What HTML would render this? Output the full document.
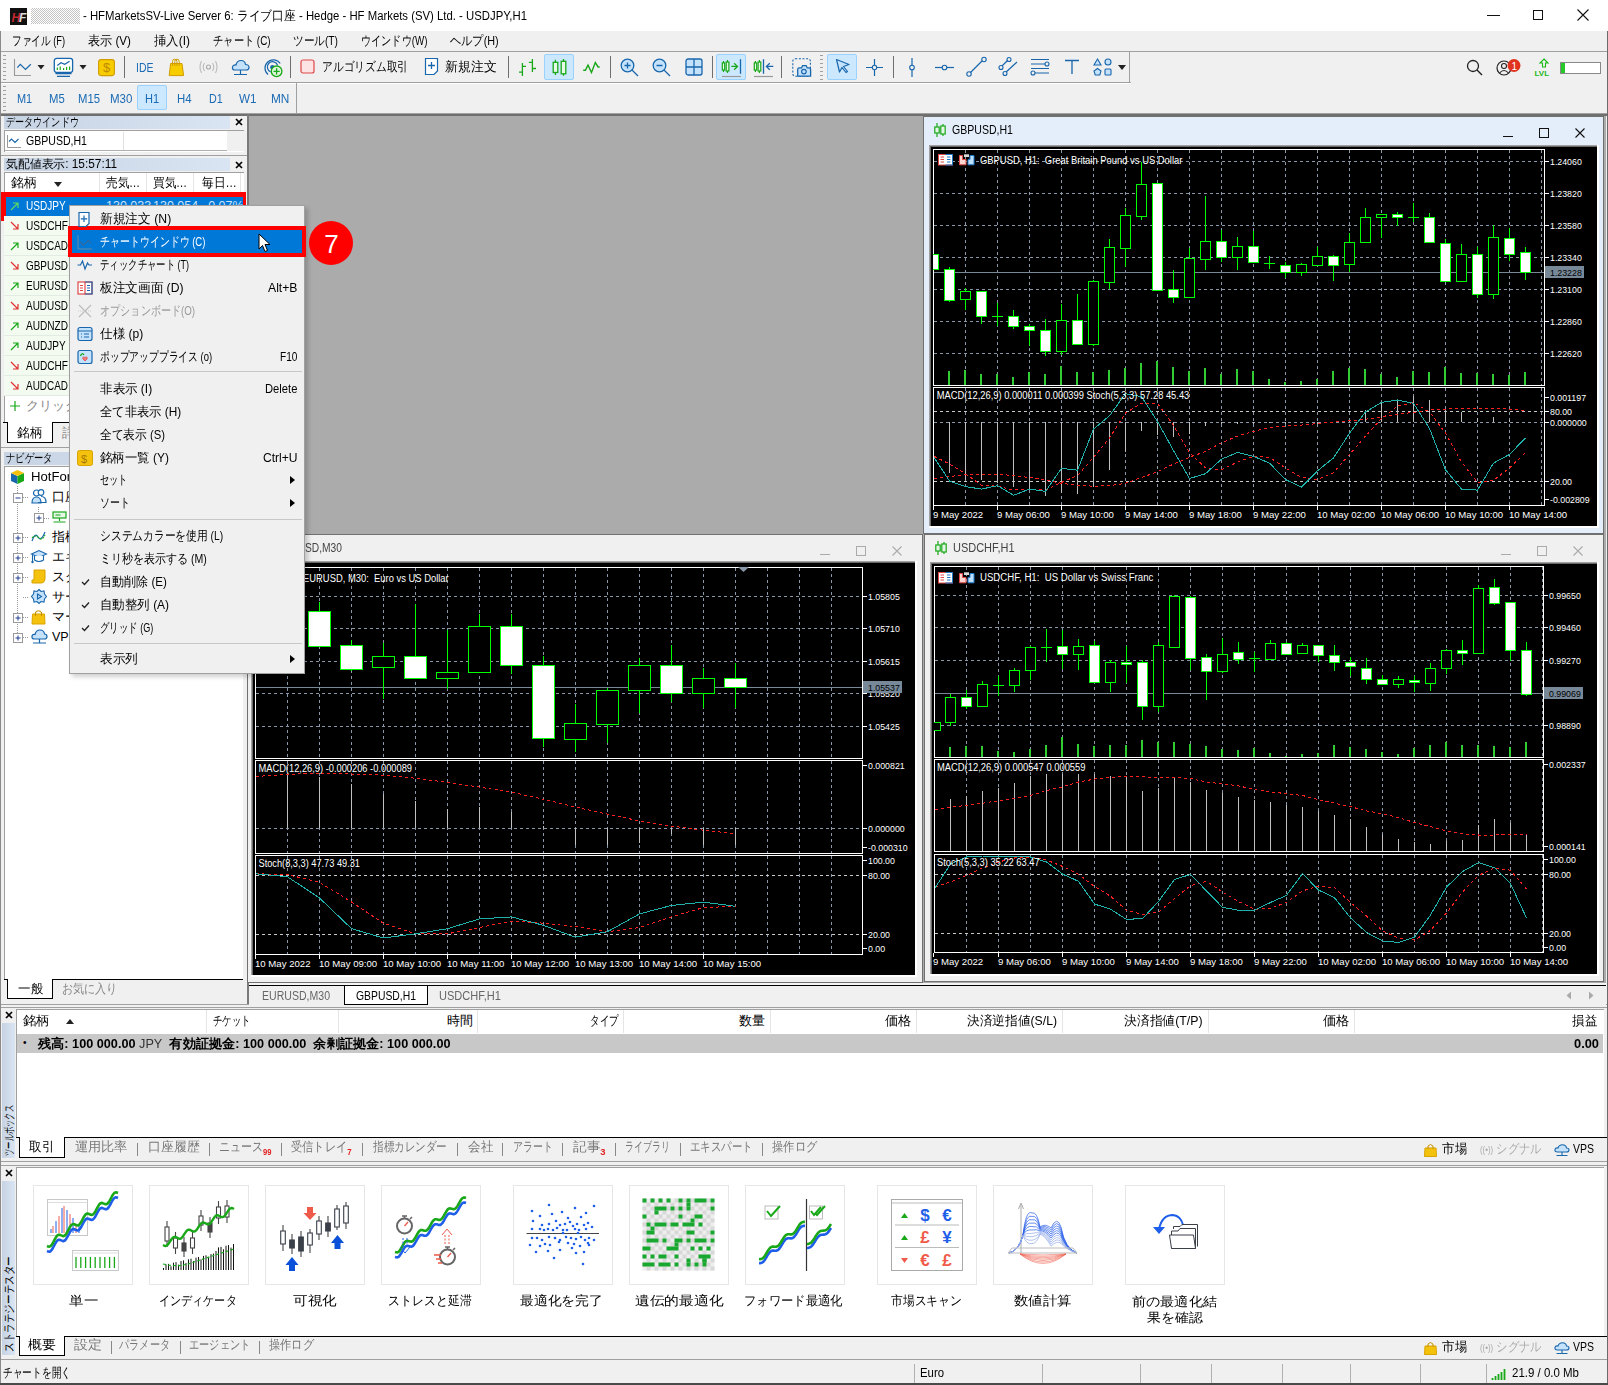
<!DOCTYPE html><html><head><meta charset="utf-8"><style>
html,body{margin:0;padding:0;}
body{width:1608px;height:1385px;position:relative;overflow:hidden;background:#f0f0f0;font-family:"Liberation Sans",sans-serif;font-size:12px;color:#000;font-feature-settings:"palt";}
.a{position:absolute;}
.t{position:absolute;white-space:nowrap;line-height:16px;}
svg{overflow:visible;}
</style></head><body>
<div class="a" style="left:0px;top:0px;width:1608px;height:31px;background:#fff;"></div>
<svg class="a" style="left:10px;top:8px;" width="17" height="17" viewBox="0 0 17 17"><rect width="17" height="17" fill="#111"/><text x="1.5" y="13.5" font-size="12" font-style="italic" font-weight="bold" fill="#c0282d" font-family="Liberation Sans">H</text><text x="9" y="13.5" font-size="12" font-style="italic" font-weight="bold" fill="#ddd" font-family="Liberation Sans">F</text></svg>
<div class="a" style="left:31px;top:8px;width:49px;height:16px;background:repeating-conic-gradient(#c4c4c4 0 25%,#fff 0 50%) 0 0/2px 2px;"></div>
<div class="t" style="left:83px;top:8px;--w:444;font-size:12.5px;color:#000;">- HFMarketsSV-Live Server 6: ライブ口座 - Hedge - HF Markets (SV) Ltd. - USDJPY,H1</div>
<div class="a" style="left:1487px;top:15px;width:13px;height:1px;background:#111;"></div>
<div class="a" style="left:1533px;top:10px;width:10px;height:10px;border:1px solid #111;box-sizing:border-box;"></div>
<svg class="a" style="left:1577px;top:9px;" width="12" height="12" viewBox="0 0 12 12"><path d="M0.5 0.5L11.5 11.5M11.5 0.5L0.5 11.5" stroke="#111" stroke-width="1.1"/></svg>
<div class="t" style="left:12px;top:33px;--w:53;font-size:12.5px;">ファイル (F)</div>
<div class="t" style="left:88px;top:33px;--w:43;font-size:12.5px;">表示 (V)</div>
<div class="t" style="left:154px;top:33px;--w:36;font-size:12.5px;">挿入(I)</div>
<div class="t" style="left:213px;top:33px;--w:57.6;font-size:12.5px;">チャート (C)</div>
<div class="t" style="left:293px;top:33px;--w:45;font-size:12.5px;">ツール(T)</div>
<div class="t" style="left:361px;top:33px;--w:66.5;font-size:12.5px;">ウインドウ(W)</div>
<div class="t" style="left:450px;top:33px;--w:48.7;font-size:12.5px;">ヘルプ(H)</div>
<div class="a" style="left:0px;top:51px;width:1608px;height:1px;background:#a0a0a0;"></div>
<div class="a" style="left:0px;top:52px;width:1130px;height:30px;background:#f0f0f0;border-right:1px solid #a0a0a0;box-sizing:border-box;"></div>
<div class="a" style="left:0px;top:82px;width:1131px;height:1px;background:#a0a0a0;"></div>
<div class="a" style="left:0px;top:83px;width:1131px;height:1px;background:#fff;"></div>
<div class="a" style="left:3px;top:55px;width:3px;height:25px;background-image:repeating-linear-gradient(#a0a0a0 0 1px,transparent 1px 4px);"></div>
<div class="a" style="left:820px;top:55px;width:3px;height:25px;background-image:repeating-linear-gradient(#a0a0a0 0 1px,transparent 1px 4px);"></div>
<div class="a" style="left:3px;top:86px;width:3px;height:25px;background-image:repeating-linear-gradient(#a0a0a0 0 1px,transparent 1px 4px);"></div>
<div class="a" style="left:124px;top:56px;width:1px;height:22px;background:#6f6f6f;"></div>
<div class="a" style="left:290px;top:56px;width:1px;height:22px;background:#6f6f6f;"></div>
<div class="a" style="left:508px;top:56px;width:1px;height:22px;background:#6f6f6f;"></div>
<div class="a" style="left:610px;top:56px;width:1px;height:22px;background:#6f6f6f;"></div>
<div class="a" style="left:712px;top:56px;width:1px;height:22px;background:#6f6f6f;"></div>
<div class="a" style="left:781px;top:56px;width:1px;height:22px;background:#6f6f6f;"></div>
<div class="a" style="left:893px;top:56px;width:1px;height:22px;background:#6f6f6f;"></div>
<svg class="a" style="left:0px;top:52px;" width="40" height="30" viewBox="0 0 40 30"><path d="M14.5 7V23.5H31" stroke="#999" stroke-width="1.1" fill="none"/><path d="M17.3 67.7L20.3 64.3L25.5 69.5L30.8 64.3" transform="translate(0,-52)" stroke="#1866ac" stroke-width="1.2" fill="none"/></svg>
<svg class="a" style="left:37px;top:65px;" width="8" height="5" viewBox="0 0 8 5"><path d="M0.5 0H7.5L4 4.5Z" fill="#222"/></svg>
<svg class="a" style="left:53px;top:57px;" width="21" height="21" viewBox="0 0 21 21"><rect x="1.3" y="1.3" width="18.3" height="14.2" rx="2.5" fill="#fff" stroke="#1866ac" stroke-width="1.3"/><path d="M4.3 8.4L8 5.8L11.7 7.3L16.6 4.3" stroke="#1866ac" stroke-width="1.2" fill="none"/><path d="M4.3 10.5V13M7.2 9.5V13M10.6 11V13M13.6 10V13M16.6 9.5V13" stroke="#18a818" stroke-width="1.2"/><path d="M2.5 16.6H18.5M4 19.3H17" stroke="#1866ac" stroke-width="1.2"/></svg>
<svg class="a" style="left:79px;top:65px;" width="8" height="5" viewBox="0 0 8 5"><path d="M0.5 0H7.5L4 4.5Z" fill="#222"/></svg>
<svg class="a" style="left:98px;top:59px;" width="17" height="17" viewBox="0 0 17 17"><rect x="0.6" y="0.6" width="15.8" height="16" rx="2.5" fill="#f8cd00" stroke="#d09c00" stroke-width="1.1"/><text x="8.5" y="13.3" text-anchor="middle" font-size="13" fill="#c08a00" font-family="Liberation Sans">$</text></svg>
<div class="t" style="left:135.5px;top:60px;--w:17.5;font-size:13px;color:#1a6ab4;">IDE</div>
<svg class="a" style="left:160px;top:52px" width="130" height="30" viewBox="160 52 130 30"><path d="M170.6 63.5H182L183.6 75.6H169.2Z" fill="#f8cd00" stroke="#d09c00" stroke-width="1"/><path d="M172.5 66V61.5Q172.5 59.2 174.7 59.2Q176.9 59.2 176.9 61.5V66M174.8 66V61.5Q174.8 59.2 177 59.2Q179.2 59.2 179.2 61.5V66" fill="none" stroke="#d09c00" stroke-width="1"/><path d="M268 74.5A8.3 8.3 0 1 1 280.2 63.5M270.8 72A5.3 5.3 0 1 1 277.6 65.2" fill="none" stroke="#1866ac" stroke-width="1.2"/><circle cx="272.4" cy="67.2" r="2.2" fill="#1866ac"/><circle cx="276.6" cy="71.3" r="5.3" fill="#dcf6dc" stroke="#18a818" stroke-width="1.3"/><path d="M276.6 68.2V74.4M273.5 71.3H279.7" stroke="#18a818" stroke-width="1.3"/></svg>
<svg class="a" style="left:199px;top:60px;" width="19" height="14" viewBox="0 0 19 14"><circle cx="9.5" cy="7" r="2" fill="none" stroke="#aaa" stroke-width="1.1"/><path d="M5.5 3Q3 7 5.5 11M13.5 3Q16 7 13.5 11M2.5 1Q-0.5 7 2.5 13M16.5 1Q19.5 7 16.5 13" stroke="#bbb" fill="none" stroke-width="1.1"/></svg>
<svg class="a" style="left:231px;top:59px;" width="19" height="18" viewBox="0 0 19 18"><path d="M4 11Q1 11 1.5 8Q2 5.5 5 6Q6 1.5 10 1.5Q14 1.5 14.5 5.5Q18 5.5 18 8.5Q18 11 15 11Z" fill="#c4e2fb" stroke="#1866ac" stroke-width="1.2"/><path d="M9.5 11V15M3 15.5H16" stroke="#1866ac" stroke-width="1.2"/></svg>
<svg class="a" style="left:300px;top:59px;" width="15" height="15" viewBox="0 0 15 15"><rect x="1" y="1" width="13" height="13" rx="2" fill="#fde4e4" stroke="#e04848" stroke-width="1.2"/></svg>
<div class="t" style="left:322px;top:59px;--w:86;font-size:13px;">アルゴリズム取引</div>
<svg class="a" style="left:424px;top:57px;" width="15" height="19" viewBox="0 0 15 19"><path d="M1.5 1.5H13.5V14L10 17.5H1.5Z" fill="#fff" stroke="#1866ac" stroke-width="1.2"/><path d="M7.5 5V12M4 8.5H11" stroke="#1866ac" stroke-width="1.3"/></svg>
<div class="t" style="left:445px;top:59px;--w:51.5;font-size:13px;">新規注文</div>
<div class="a" style="left:544px;top:54px;width:30px;height:26px;background:#cce8ff;border:1px solid #99d1ff;border-radius:2px;box-sizing:border-box;"></div>
<svg class="a" style="left:500px;top:52px" width="120" height="30" viewBox="500 52 120 30"><g stroke="#18a818" stroke-width="1.3" fill="none"><path d="M522.4 63V76M519 72.2H522.4M522.4 66.4H526M532.4 59V72M528.9 62.3H532.4M532.4 68.5H536"/><path d="M555.4 59.8V74.9M563.5 59V75.8"/><rect x="553.2" y="62.3" width="4.6" height="10.2" fill="#e6fae6"/><rect x="561.2" y="61.3" width="4.6" height="12.5" fill="#e6fae6"/><path d="M583.2 70.3H585.4L588 65.2L591.5 72.5L595.3 62.6L598.1 67H599.7" stroke-width="1.4"/></g></svg>
<svg class="a" style="left:620px;top:58px;" width="19" height="19" viewBox="0 0 19 19"><circle cx="7.5" cy="7.5" r="6.3" fill="#c4e2fb" stroke="#1866ac" stroke-width="1.3"/><path d="M12 12L18 18M7.5 4.5V10.5M4.5 7.5H10.5" stroke="#1866ac" stroke-width="1.3"/></svg>
<svg class="a" style="left:652px;top:58px;" width="19" height="19" viewBox="0 0 19 19"><circle cx="7.5" cy="7.5" r="6.3" fill="#c4e2fb" stroke="#1866ac" stroke-width="1.3"/><path d="M12 12L18 18M4.5 7.5H10.5" stroke="#1866ac" stroke-width="1.3"/></svg>
<svg class="a" style="left:685px;top:58px;" width="18" height="18" viewBox="0 0 18 18"><rect x="1" y="1" width="16" height="16" rx="2" fill="#c4e2fb" stroke="#1866ac" stroke-width="1.3"/><path d="M9 1V17M1 9H17" stroke="#1866ac" stroke-width="1.3"/></svg>
<div class="a" style="left:716px;top:54px;width:30px;height:26px;background:#cce8ff;border:1px solid #99d1ff;border-radius:2px;box-sizing:border-box;"></div>
<svg class="a" style="left:712px;top:52px" width="100" height="30" viewBox="712 52 100 30"><g fill="none" stroke-width="1.2"><path d="M723.5 61V72M727.5 60V73" stroke="#18a818"/><rect x="722.3" y="62.9" width="2.4" height="7.1" fill="#e6fae6" stroke="#18a818"/><rect x="726.2" y="62" width="2.7" height="9" fill="#e6fae6" stroke="#18a818"/><path d="M731.3 66.4H737.5M734.1 63.2L737.5 66.4L734.1 69.7" stroke="#18a818" stroke-width="1.3"/><path d="M740.5 59.2V73.8" stroke="#1866ac" stroke-width="1.3"/><path d="M722 76.5H741" stroke="#999"/><path d="M755.4 61V72M759.4 60V73" stroke="#18a818"/><rect x="754.3" y="62.9" width="2.4" height="7.1" fill="#e6fae6" stroke="#18a818"/><rect x="758.1" y="62" width="2.7" height="9" fill="#e6fae6" stroke="#18a818"/><path d="M763.5 59.2V73.8" stroke="#1866ac" stroke-width="1.3"/><path d="M773.3 66.4H766.4M769.8 63.2L766.4 66.4L769.8 69.7" stroke="#1866ac" stroke-width="1.3"/><path d="M754 76.5H773" stroke="#999"/><rect x="792.8" y="58.8" width="17.6" height="17.4" rx="2.5" stroke="#1866ac" stroke-width="1.1" stroke-dasharray="2 1.6"/><path d="M797.7 76.2V69.5Q797.7 67.9 799.3 67.9H801.6L802.6 65.6H806.2L807.2 67.9H809Q810.6 67.9 810.6 69.5V76.2Z" fill="#c4e2fb" stroke="#1866ac" stroke-width="1.3"/><circle cx="803.9" cy="71.6" r="2.3" stroke="#1866ac" stroke-width="1.2"/></g></svg>
<div class="a" style="left:827px;top:54px;width:30px;height:26px;background:#cce8ff;border:1px solid #99d1ff;border-radius:2px;box-sizing:border-box;"></div>
<svg class="a" style="left:835px;top:58px;" width="16" height="16" viewBox="0 0 16 16"><path d="M1.5 1.5L14 6.5L8.5 8.5L12.5 13.5L11 14.5L7 9.5L4.5 14Z" fill="#c4e2fb" stroke="#1866ac" stroke-width="1.2" stroke-linejoin="round"/></svg>
<svg class="a" style="left:865px;top:58px;" width="19" height="19" viewBox="0 0 19 19"><path d="M9.5 1V18M1 9.5H18" stroke="#1866ac" stroke-width="1.2"/><circle cx="9.5" cy="9.5" r="2.2" fill="#f0f0f0" stroke="#1866ac" stroke-width="1.1"/></svg>
<svg class="a" style="left:905px;top:57px;" width="14" height="21" viewBox="0 0 14 21"><path d="M7 1V20" stroke="#1866ac" stroke-width="1.2"/><circle cx="7" cy="10.5" r="2.3" fill="#f0f0f0" stroke="#1866ac" stroke-width="1.1"/></svg>
<svg class="a" style="left:934px;top:60px;" width="21" height="15" viewBox="0 0 21 15"><path d="M1 7.5H20" stroke="#1866ac" stroke-width="1.2"/><circle cx="10.5" cy="7.5" r="2.3" fill="#f0f0f0" stroke="#1866ac" stroke-width="1.1"/></svg>
<svg class="a" style="left:966px;top:57px;" width="21" height="20" viewBox="0 0 21 20"><path d="M4 16L17 3" stroke="#1866ac" stroke-width="1.2"/><circle cx="3" cy="17" r="2.2" fill="#f0f0f0" stroke="#1866ac" stroke-width="1.1"/><circle cx="18" cy="2.5" r="2.2" fill="#f0f0f0" stroke="#1866ac" stroke-width="1.1"/></svg>
<svg class="a" style="left:998px;top:57px;" width="21" height="20" viewBox="0 0 21 20"><path d="M3 10L10 3M7 16L19 5" stroke="#1866ac" stroke-width="1.2"/><circle cx="3" cy="10.5" r="2" fill="#f0f0f0" stroke="#1866ac" stroke-width="1.1"/><circle cx="11" cy="2.5" r="2" fill="#f0f0f0" stroke="#1866ac" stroke-width="1.1"/><circle cx="7" cy="16.5" r="2" fill="#f0f0f0" stroke="#1866ac" stroke-width="1.1"/></svg>
<svg class="a" style="left:1030px;top:57px;" width="21" height="20" viewBox="0 0 21 20"><path d="M1 2.5H19M1 7H15M1 11.5H19M4 16H19" stroke="#1866ac" stroke-width="1.2"/><circle cx="17" cy="7" r="2" fill="#f0f0f0" stroke="#1866ac" stroke-width="1.1"/><circle cx="3" cy="16" r="2" fill="#f0f0f0" stroke="#1866ac" stroke-width="1.1"/></svg>
<svg class="a" style="left:1064px;top:59px;" width="16" height="16" viewBox="0 0 16 16"><path d="M1 1.5H15M8 1.5V15" stroke="#1866ac" stroke-width="1.3"/></svg>
<svg class="a" style="left:1093px;top:58px;" width="20" height="19" viewBox="0 0 20 19"><path d="M4.5 1L8 7H1Z" fill="#c4e2fb" stroke="#1866ac" stroke-width="1.1"/><circle cx="15" cy="4" r="3" fill="#c4e2fb" stroke="#1866ac" stroke-width="1.1"/><path d="M4.5 10.5L8 13L6.8 17H2.2L1 13Z" fill="#c4e2fb" stroke="#1866ac" stroke-width="1.1"/><rect x="12" y="11" width="6" height="6" rx="1" fill="#c4e2fb" stroke="#1866ac" stroke-width="1.1"/></svg>
<svg class="a" style="left:1118px;top:65px;" width="8" height="5" viewBox="0 0 8 5"><path d="M0 0H8L4 5Z" fill="#222"/></svg>
<svg class="a" style="left:1466px;top:59px;" width="18" height="18" viewBox="0 0 18 18"><circle cx="7" cy="7" r="5.5" fill="none" stroke="#222" stroke-width="1.3"/><path d="M11 11L16 16" stroke="#222" stroke-width="1.4"/></svg>
<svg class="a" style="left:1496px;top:59px;" width="26" height="18" viewBox="0 0 26 18"><circle cx="8" cy="9" r="7" fill="none" stroke="#222" stroke-width="1.2"/><circle cx="8" cy="7" r="2.5" fill="none" stroke="#222" stroke-width="1.1"/><path d="M3.5 14Q8 9 12.5 14" stroke="#222" fill="none" stroke-width="1.1"/><circle cx="18" cy="6.5" r="6.5" fill="#e0321e"/><text x="15.6" y="10.5" font-size="10" fill="#fff" font-family="Liberation Sans">1</text></svg>
<svg class="a" style="left:1534px;top:58px;" width="20" height="18" viewBox="0 0 20 18"><path d="M10 1L14 5H11.5V9H8.5V5H6Z" fill="none" stroke="#18b818" stroke-width="1.1"/><text x="0.5" y="17.5" font-size="8" font-weight="bold" fill="#18b818" font-family="Liberation Sans">LVL</text></svg>
<div class="a" style="left:1560px;top:62px;width:41px;height:12px;background:#fff;border:1px solid #888;box-sizing:border-box;"></div>
<div class="a" style="left:1561px;top:63px;width:4px;height:10px;background:#28c828;"></div>
<div class="a" style="left:0px;top:83px;width:297px;height:30px;border-right:1px solid #a0a0a0;box-sizing:border-box;"></div>
<div class="a" style="left:0px;top:113px;width:1608px;height:1px;background:#a0a0a0;"></div>
<div class="a" style="left:137px;top:85px;width:30px;height:25px;background:#cce8ff;border:1px solid #99d1ff;border-radius:2px;box-sizing:border-box;"></div>
<div class="t" style="left:16.5px;top:91px;--w:15.2;font-size:13px;color:#1a6ab4;">M1</div>
<div class="t" style="left:48.7px;top:91px;--w:15.7;font-size:13px;color:#1a6ab4;">M5</div>
<div class="t" style="left:77.8px;top:91px;--w:22;font-size:13px;color:#1a6ab4;">M15</div>
<div class="t" style="left:109.5px;top:91px;--w:22.4;font-size:13px;color:#1a6ab4;">M30</div>
<div class="t" style="left:144.9px;top:91px;--w:14.1;font-size:13px;color:#1a6ab4;">H1</div>
<div class="t" style="left:177px;top:91px;--w:14.6;font-size:13px;color:#1a6ab4;">H4</div>
<div class="t" style="left:209.3px;top:91px;--w:13.7;font-size:13px;color:#1a6ab4;">D1</div>
<div class="t" style="left:239px;top:91px;--w:17.5;font-size:13px;color:#1a6ab4;">W1</div>
<div class="t" style="left:271.3px;top:91px;--w:18.4;font-size:13px;color:#1a6ab4;">MN</div>
<div class="a" style="left:0px;top:114px;width:249px;height:891px;background:#f0f0f0;"></div>
<div class="a" style="left:0px;top:114px;width:1608px;height:2px;background:#6f6f6f;"></div>
<div class="a" style="left:247px;top:114px;width:2px;height:891px;background:#7a7a7a;"></div>
<div class="a" style="left:4px;top:116px;width:226px;height:13px;background:linear-gradient(90deg,#c6d3e3,#dae5f3);"></div>
<div class="t" style="left:6px;top:115px;--w:72.7;font-size:12px;line-height:14px;">データウインドウ</div>
<svg class="a" style="left:235px;top:118px;" width="8" height="8" viewBox="0 0 8 8"><path d="M1 1L7 7M7 1L1 7" stroke="#000" stroke-width="1.7"/></svg>
<div class="a" style="left:4px;top:130px;width:240px;height:22px;background:#fff;border-top:1px solid #a0a0a0;border-left:1px solid #a0a0a0;box-sizing:border-box;"></div>
<div class="a" style="left:227px;top:131px;width:17px;height:20px;background:#f0f0f0;"></div>
<div class="a" style="left:123px;top:132px;width:1px;height:19px;background:#e0e0e0;"></div>
<div class="a" style="left:5px;top:150px;width:222px;height:1px;background:#b0b0b0;"></div>
<svg class="a" style="left:6px;top:134px;" width="16" height="15" viewBox="0 0 16 15"><path d="M1.5 1V13.5H15" stroke="#999" fill="none"/><path d="M3 7.5L5.5 5L9 8.5L12.5 5" stroke="#1866ac" stroke-width="1.1" fill="none"/></svg>
<div class="t" style="left:26px;top:133px;--w:61;font-size:12.5px;">GBPUSD,H1</div>
<div class="a" style="left:0px;top:155px;width:247px;height:1px;background:#a0a0a0;"></div>
<div class="a" style="left:4px;top:158px;width:226px;height:13px;background:linear-gradient(90deg,#c6d3e3,#dae5f3);"></div>
<div class="t" style="left:6px;top:157px;--w:111;font-size:12px;line-height:14px;">気配値表示: 15:57:11</div>
<svg class="a" style="left:235px;top:161px;" width="8" height="8" viewBox="0 0 8 8"><path d="M1 1L7 7M7 1L1 7" stroke="#000" stroke-width="1.7"/></svg>
<div class="a" style="left:4px;top:172px;width:240px;height:250px;background:#fff;border-top:1px solid #a0a0a0;border-left:1px solid #a0a0a0;box-sizing:border-box;"></div>
<div class="t" style="left:11px;top:175px;--w:25.7;font-size:12.5px;">銘柄</div>
<svg class="a" style="left:54px;top:182px;" width="8" height="5" viewBox="0 0 8 5"><path d="M0 0H8L4 5Z" fill="#222"/></svg>
<div class="a" style="left:99px;top:173px;width:1px;height:20px;background:#e5e5e5;"></div>
<div class="a" style="left:146px;top:173px;width:1px;height:20px;background:#e5e5e5;"></div>
<div class="a" style="left:193px;top:173px;width:1px;height:20px;background:#e5e5e5;"></div>
<div class="a" style="left:240px;top:173px;width:1px;height:20px;background:#e5e5e5;"></div>
<div class="t" style="left:106px;top:175px;--w:34.2;font-size:12.5px;">売気…</div>
<div class="t" style="left:153px;top:175px;--w:34.2;font-size:12.5px;">買気…</div>
<div class="t" style="left:202px;top:175px;--w:34.7;font-size:12.5px;">毎日…</div>
<div class="a" style="left:1px;top:192px;width:245px;height:29px;background:#ff0000;"></div>
<div class="a" style="left:6px;top:197px;width:237px;height:19px;background:#0078d7;"></div>
<svg class="a" style="left:9px;top:200px;" width="12" height="12" viewBox="0 0 12 12"><path d="M2 10L9 3M4 3H9V8" stroke="#5fdc5f" stroke-width="1.2" fill="none"/></svg>
<div class="t" style="left:26px;top:198px;--w:39.6;font-size:12.5px;color:#fff;">USDJPY</div>
<div class="t" style="left:106px;top:198px;font-size:12.5px;color:#cfe3f7;">130.033</div>
<div class="t" style="left:153px;top:198px;font-size:12.5px;color:#cfe3f7;">130.054</div>
<div class="t" style="left:204px;top:198px;font-size:12.5px;color:#cfe3f7;">-0.07%</div>
<div class="a" style="left:4px;top:216px;width:239px;height:20px;background:#f3fbf1;border-bottom:1px solid #e3ece3;box-sizing:border-box;"></div>
<svg class="a" style="left:9px;top:220px;" width="12" height="12" viewBox="0 0 12 12"><path d="M2 2L9 9M4 9H9V4" stroke="#e03030" stroke-width="1.2" fill="none"/></svg>
<div class="t" style="left:26px;top:218px;--w:42;font-size:12.5px;color:#000;">USDCHF</div>
<div class="a" style="left:4px;top:236px;width:239px;height:20px;background:#f3fbf1;border-bottom:1px solid #e3ece3;box-sizing:border-box;"></div>
<svg class="a" style="left:9px;top:240px;" width="12" height="12" viewBox="0 0 12 12"><path d="M2 10L9 3M4 3H9V8" stroke="#18a818" stroke-width="1.2" fill="none"/></svg>
<div class="t" style="left:26px;top:238px;--w:42;font-size:12.5px;color:#000;">USDCAD</div>
<div class="a" style="left:4px;top:256px;width:239px;height:20px;background:#f3fbf1;border-bottom:1px solid #e3ece3;box-sizing:border-box;"></div>
<svg class="a" style="left:9px;top:260px;" width="12" height="12" viewBox="0 0 12 12"><path d="M2 2L9 9M4 9H9V4" stroke="#e03030" stroke-width="1.2" fill="none"/></svg>
<div class="t" style="left:26px;top:258px;--w:42;font-size:12.5px;color:#000;">GBPUSD</div>
<div class="a" style="left:4px;top:276px;width:239px;height:20px;background:#f3fbf1;border-bottom:1px solid #e3ece3;box-sizing:border-box;"></div>
<svg class="a" style="left:9px;top:280px;" width="12" height="12" viewBox="0 0 12 12"><path d="M2 10L9 3M4 3H9V8" stroke="#18a818" stroke-width="1.2" fill="none"/></svg>
<div class="t" style="left:26px;top:278px;--w:42;font-size:12.5px;color:#000;">EURUSD</div>
<div class="a" style="left:4px;top:296px;width:239px;height:20px;background:#f3fbf1;border-bottom:1px solid #e3ece3;box-sizing:border-box;"></div>
<svg class="a" style="left:9px;top:300px;" width="12" height="12" viewBox="0 0 12 12"><path d="M2 2L9 9M4 9H9V4" stroke="#e03030" stroke-width="1.2" fill="none"/></svg>
<div class="t" style="left:26px;top:298px;--w:42;font-size:12.5px;color:#000;">AUDUSD</div>
<div class="a" style="left:4px;top:316px;width:239px;height:20px;background:#f3fbf1;border-bottom:1px solid #e3ece3;box-sizing:border-box;"></div>
<svg class="a" style="left:9px;top:320px;" width="12" height="12" viewBox="0 0 12 12"><path d="M2 10L9 3M4 3H9V8" stroke="#18a818" stroke-width="1.2" fill="none"/></svg>
<div class="t" style="left:26px;top:318px;--w:42;font-size:12.5px;color:#000;">AUDNZD</div>
<div class="a" style="left:4px;top:336px;width:239px;height:20px;background:#f3fbf1;border-bottom:1px solid #e3ece3;box-sizing:border-box;"></div>
<svg class="a" style="left:9px;top:340px;" width="12" height="12" viewBox="0 0 12 12"><path d="M2 10L9 3M4 3H9V8" stroke="#18a818" stroke-width="1.2" fill="none"/></svg>
<div class="t" style="left:26px;top:338px;--w:39.6;font-size:12.5px;color:#000;">AUDJPY</div>
<div class="a" style="left:4px;top:356px;width:239px;height:20px;background:#f3fbf1;border-bottom:1px solid #e3ece3;box-sizing:border-box;"></div>
<svg class="a" style="left:9px;top:360px;" width="12" height="12" viewBox="0 0 12 12"><path d="M2 2L9 9M4 9H9V4" stroke="#e03030" stroke-width="1.2" fill="none"/></svg>
<div class="t" style="left:26px;top:358px;--w:42;font-size:12.5px;color:#000;">AUDCHF</div>
<div class="a" style="left:4px;top:376px;width:239px;height:20px;background:#f3fbf1;border-bottom:1px solid #e3ece3;box-sizing:border-box;"></div>
<svg class="a" style="left:9px;top:380px;" width="12" height="12" viewBox="0 0 12 12"><path d="M2 2L9 9M4 9H9V4" stroke="#e03030" stroke-width="1.2" fill="none"/></svg>
<div class="t" style="left:26px;top:378px;--w:42;font-size:12.5px;color:#000;">AUDCAD</div>
<svg class="a" style="left:9px;top:400px;" width="12" height="12" viewBox="0 0 12 12"><path d="M6 1V11M1 6H11" stroke="#18a818" stroke-width="1.2"/></svg>
<div class="t" style="left:26px;top:398px;font-size:12.5px;color:#888;">クリックして…</div>
<div class="a" style="left:3px;top:422px;width:242px;height:1px;background:#000;"></div>
<div class="a" style="left:7px;top:422px;width:46px;height:21px;background:#fff;border:1px solid #000;border-top:none;box-sizing:border-box;"></div>
<div class="t" style="left:17px;top:425px;--w:25;font-size:12.5px;">銘柄</div>
<div class="t" style="left:62px;top:425px;font-size:12.5px;color:#888;">詳細</div>
<div class="a" style="left:0px;top:447px;width:247px;height:1px;background:#a0a0a0;"></div>
<div class="a" style="left:4px;top:452px;width:225px;height:13px;background:linear-gradient(90deg,#c6d3e3,#dae5f3);"></div>
<div class="t" style="left:6px;top:451px;--w:46.6;font-size:12px;line-height:14px;">ナビゲータ</div>
<svg class="a" style="left:235px;top:455px;" width="8" height="8" viewBox="0 0 8 8"><path d="M1 1L7 7M7 1L1 7" stroke="#000" stroke-width="1.7"/></svg>
<div class="a" style="left:4px;top:466px;width:239px;height:513px;background:#fff;border-top:1px solid #a0a0a0;border-left:1px solid #a0a0a0;box-sizing:border-box;"></div>
<svg class="a" style="left:10px;top:469px;" width="15" height="16" viewBox="0 0 15 16"><path d="M1 4L7.5 1L14 4V12L7.5 15L1 12Z" fill="#fff"/><path d="M1 4L7.5 7V15L1 12Z" fill="#1866ac"/><path d="M7.5 7L14 4V12L7.5 15Z" fill="#18a818"/><path d="M1 4L7.5 1L14 4L7.5 7Z" fill="#f4c20d"/></svg>
<div class="t" style="left:31px;top:469px;--w:54;font-size:12.5px;">HotForex</div>
<div class="a" style="left:17px;top:486px;width:1px;height:152px;background-image:repeating-linear-gradient(#999 0 1px,transparent 1px 2px);"></div>
<div class="a" style="left:38px;top:507px;width:1px;height:10px;background-image:repeating-linear-gradient(#999 0 1px,transparent 1px 2px);"></div>
<svg class="a" style="left:13px;top:493px;" width="10" height="10" viewBox="0 0 10 10"><rect x="0.5" y="0.5" width="9" height="9" fill="#fff" stroke="#999"/><path d="M2.5 5H7.5" stroke="#1e3e8e"/></svg>
<div class="a" style="left:23px;top:497px;width:6px;height:1px;background-image:repeating-linear-gradient(90deg,#999 0 1px,transparent 1px 2px);"></div>
<svg class="a" style="left:31px;top:489px;" width="17" height="16" viewBox="0 0 17 16"><circle cx="5.5" cy="4" r="3" fill="#fff" stroke="#1866ac" stroke-width="1.2"/><path d="M1 14Q1 8 5.5 8Q10 8 10 14Z" fill="#c4e2fb" stroke="#1866ac" stroke-width="1.2"/><circle cx="10" cy="3.5" r="2.8" fill="#fff" stroke="#1866ac" stroke-width="1.2"/><path d="M7 13.5H15Q15 7.5 10 7.5" fill="none" stroke="#1866ac" stroke-width="1.2"/></svg>
<div class="t" style="left:52px;top:489px;font-size:12.5px;">口座</div>
<svg class="a" style="left:13px;top:533px;" width="10" height="10" viewBox="0 0 10 10"><rect x="0.5" y="0.5" width="9" height="9" fill="#fff" stroke="#999"/><path d="M2.5 5H7.5" stroke="#1e3e8e"/><path d="M5 2.5V7.5" stroke="#1e3e8e"/></svg>
<div class="a" style="left:23px;top:537px;width:6px;height:1px;background-image:repeating-linear-gradient(90deg,#999 0 1px,transparent 1px 2px);"></div>
<svg class="a" style="left:31px;top:529px;" width="17" height="16" viewBox="0 0 17 16"><path d="M1 12Q4 3 7 8Q10 13 14 3" stroke="#1866ac" stroke-width="1.2" fill="none"/><path d="M1 9Q4 5 8 9Q11 12 14 6" stroke="#18a818" stroke-width="1.2" fill="none" stroke-dasharray="2 1"/></svg>
<div class="t" style="left:52px;top:529px;font-size:12.5px;">指標</div>
<svg class="a" style="left:13px;top:553px;" width="10" height="10" viewBox="0 0 10 10"><rect x="0.5" y="0.5" width="9" height="9" fill="#fff" stroke="#999"/><path d="M2.5 5H7.5" stroke="#1e3e8e"/><path d="M5 2.5V7.5" stroke="#1e3e8e"/></svg>
<div class="a" style="left:23px;top:557px;width:6px;height:1px;background-image:repeating-linear-gradient(90deg,#999 0 1px,transparent 1px 2px);"></div>
<svg class="a" style="left:31px;top:549px;" width="17" height="16" viewBox="0 0 17 16"><path d="M0.5 5L8 1.5L15.5 5L8 8.5Z" fill="#c4e2fb" stroke="#1866ac" stroke-width="1.1"/><path d="M3.5 7V11Q8 14 12.5 11V7" fill="#fff" stroke="#1866ac" stroke-width="1.1"/><path d="M1.5 5.5V12" stroke="#1866ac" stroke-width="1.1"/><circle cx="1.5" cy="13" r="1.2" fill="#1866ac"/></svg>
<div class="t" style="left:52px;top:549px;font-size:12.5px;">エキスパート</div>
<svg class="a" style="left:13px;top:573px;" width="10" height="10" viewBox="0 0 10 10"><rect x="0.5" y="0.5" width="9" height="9" fill="#fff" stroke="#999"/><path d="M2.5 5H7.5" stroke="#1e3e8e"/><path d="M5 2.5V7.5" stroke="#1e3e8e"/></svg>
<div class="a" style="left:23px;top:577px;width:6px;height:1px;background-image:repeating-linear-gradient(90deg,#999 0 1px,transparent 1px 2px);"></div>
<svg class="a" style="left:31px;top:569px;" width="17" height="16" viewBox="0 0 17 16"><path d="M3 1H14V10Q14 13 11 14H1V11H3Z" fill="#f4c20d" stroke="#d9a300"/></svg>
<div class="t" style="left:52px;top:569px;font-size:12.5px;">スクリプト</div>
<div class="a" style="left:23px;top:597px;width:6px;height:1px;background-image:repeating-linear-gradient(90deg,#999 0 1px,transparent 1px 2px);"></div>
<svg class="a" style="left:31px;top:589px;" width="17" height="16" viewBox="0 0 17 16"><path d="M8 0.5L10 2.5L13 2L13.5 5L15.5 7.5L13.5 10L13 13L10 12.5L8 14.5L6 12.5L3 13L2.5 10L0.5 7.5L2.5 5L3 2L6 2.5Z" fill="#c4e2fb" stroke="#1866ac" stroke-width="1.1"/><path d="M6.5 5V10L10.5 7.5Z" fill="none" stroke="#1866ac" stroke-width="1.1"/></svg>
<div class="t" style="left:52px;top:589px;font-size:12.5px;">サービス</div>
<svg class="a" style="left:13px;top:613px;" width="10" height="10" viewBox="0 0 10 10"><rect x="0.5" y="0.5" width="9" height="9" fill="#fff" stroke="#999"/><path d="M2.5 5H7.5" stroke="#1e3e8e"/><path d="M5 2.5V7.5" stroke="#1e3e8e"/></svg>
<div class="a" style="left:23px;top:617px;width:6px;height:1px;background-image:repeating-linear-gradient(90deg,#999 0 1px,transparent 1px 2px);"></div>
<svg class="a" style="left:31px;top:609px;" width="17" height="16" viewBox="0 0 17 16"><path d="M1.5 5H13.5L14 15H1Z" fill="#f4c20d" stroke="#d9a300"/><path d="M4.5 7V3.5Q7.5 0 10.5 3.5V7" stroke="#c89000" fill="none" stroke-width="1.1"/></svg>
<div class="t" style="left:52px;top:609px;font-size:12.5px;">マーケット</div>
<svg class="a" style="left:13px;top:633px;" width="10" height="10" viewBox="0 0 10 10"><rect x="0.5" y="0.5" width="9" height="9" fill="#fff" stroke="#999"/><path d="M2.5 5H7.5" stroke="#1e3e8e"/><path d="M5 2.5V7.5" stroke="#1e3e8e"/></svg>
<div class="a" style="left:23px;top:637px;width:6px;height:1px;background-image:repeating-linear-gradient(90deg,#999 0 1px,transparent 1px 2px);"></div>
<svg class="a" style="left:31px;top:629px;" width="17" height="16" viewBox="0 0 17 16"><path d="M3.5 10Q0.5 10 1 7Q1.5 5 4 5.5Q5 1 9 1Q13 1 13.5 5Q16 5 16 7.5Q16 10 13.5 10Z" fill="#c4e2fb" stroke="#1866ac" stroke-width="1.2"/><path d="M8.5 10V14M2 14H15" stroke="#1866ac" stroke-width="1.2"/></svg>
<div class="t" style="left:52px;top:629px;font-size:12.5px;">VPS</div>
<svg class="a" style="left:34px;top:513px;" width="10" height="10" viewBox="0 0 10 10"><rect x="0.5" y="0.5" width="9" height="9" fill="#fff" stroke="#999"/><path d="M2.5 5H7.5" stroke="#1e3e8e"/><path d="M5 2.5V7.5" stroke="#1e3e8e"/></svg>
<div class="a" style="left:44px;top:518px;width:6px;height:1px;background-image:repeating-linear-gradient(90deg,#999 0 1px,transparent 1px 2px);"></div>
<svg class="a" style="left:52px;top:511px;" width="15" height="13" viewBox="0 0 15 13"><rect x="1" y="1" width="13" height="6" fill="#e6f6e6" stroke="#18a818" stroke-width="1.2"/><path d="M3.5 4H8.5M7.5 7V10M1.5 11H13.5" stroke="#18a818" stroke-width="1.2"/></svg>
<div class="a" style="left:4px;top:979px;width:239px;height:1px;background:#000;"></div>
<div class="a" style="left:7px;top:979px;width:46px;height:20px;background:#fff;border:1px solid #000;border-top:none;box-sizing:border-box;"></div>
<div class="t" style="left:18px;top:981px;--w:25;font-size:12.5px;">一般</div>
<div class="t" style="left:62px;top:981px;--w:55.5;font-size:12.5px;color:#888;">お気に入り</div>
<div class="a" style="left:0px;top:1004px;width:1608px;height:1px;background:#a0a0a0;"></div>
<div class="a" style="left:249px;top:116px;width:1357px;height:869px;background:#ababab;"></div>
<div class="a" style="left:249px;top:983px;width:1357px;height:2px;background:#f4f4f4;"></div>
<div class="a" style="left:923px;top:116px;width:681px;height:418px;background:#e3eefa;border:1px solid #707070;box-sizing:border-box;"></div>
<svg class="a" style="left:934px;top:123px;" width="12" height="14" viewBox="0 0 12 14"><path d="M3 0V14M9 1V13" stroke="#18a818" stroke-width="1.2"/><rect x="0.8" y="4" width="4.4" height="6" fill="#e6f6e6" stroke="#18a818" stroke-width="1.2"/><rect x="6.8" y="3" width="4.4" height="8" fill="#e6f6e6" stroke="#18a818" stroke-width="1.2"/></svg>
<div class="t" style="left:952px;top:122px;--w:61;font-size:12.5px;color:#000;">GBPUSD,H1</div>
<div class="a" style="left:1503px;top:136px;width:10px;height:1px;background:#111;"></div>
<div class="a" style="left:1539px;top:128px;width:10px;height:10px;border:1px solid #111;box-sizing:border-box;"></div>
<svg class="a" style="left:1575px;top:128px;" width="10" height="10" viewBox="0 0 10 10"><path d="M0.5 0.5L9.5 9.5M9.5 0.5L0.5 9.5" stroke="#111" stroke-width="1.1"/></svg>
<svg class="a" style="left:929px;top:145px" width="670" height="383" viewBox="929 145 670 383" shape-rendering="crispEdges"><rect x="929" y="145" width="668" height="381" fill="#000"/><rect x="929" y="145" width="668" height="2" fill="#6a6a6a"/><rect x="929" y="145" width="2" height="381" fill="#6a6a6a"/><rect x="929" y="145" width="668" height="1" fill="#a0a0a0"/><rect x="929" y="145" width="1" height="381" fill="#a0a0a0"/><rect x="929" y="526" width="670" height="2" fill="#fff"/><rect x="1597" y="145" width="2" height="383" fill="#fff"/><path d="M965.5 150V385M997.5 150V385M1029.5 150V385M1061.5 150V385M1093.5 150V385M1125.5 150V385M1157.5 150V385M1189.5 150V385M1221.5 150V385M1253.5 150V385M1285.5 150V385M1317.5 150V385M1349.5 150V385M1381.5 150V385M1413.5 150V385M1445.5 150V385M1477.5 150V385M1509.5 150V385M1541.5 150V385M965.5 388V505M997.5 388V505M1029.5 388V505M1061.5 388V505M1093.5 388V505M1125.5 388V505M1157.5 388V505M1189.5 388V505M1221.5 388V505M1253.5 388V505M1285.5 388V505M1317.5 388V505M1349.5 388V505M1381.5 388V505M1413.5 388V505M1445.5 388V505M1477.5 388V505M1509.5 388V505M1541.5 388V505" stroke="#8a97a8" stroke-width="1" stroke-dasharray="3 3" fill="none"/><path d="M934 161.5H1544" stroke="#8a97a8" stroke-width="1" stroke-dasharray="3 3" fill="none"/><path d="M934 193.5H1544" stroke="#8a97a8" stroke-width="1" stroke-dasharray="3 3" fill="none"/><path d="M934 225.5H1544" stroke="#8a97a8" stroke-width="1" stroke-dasharray="3 3" fill="none"/><path d="M934 257.5H1544" stroke="#8a97a8" stroke-width="1" stroke-dasharray="3 3" fill="none"/><path d="M934 289.5H1544" stroke="#8a97a8" stroke-width="1" stroke-dasharray="3 3" fill="none"/><path d="M934 321.5H1544" stroke="#8a97a8" stroke-width="1" stroke-dasharray="3 3" fill="none"/><path d="M934 353.5H1544" stroke="#8a97a8" stroke-width="1" stroke-dasharray="3 3" fill="none"/><path d="M934 411.5H1544" stroke="#c8c8c8" stroke-width="1" stroke-dasharray="3 3" fill="none"/><path d="M934 422.5H1544" stroke="#8a97a8" stroke-width="1" stroke-dasharray="3 3" fill="none"/><path d="M934 481.5H1544" stroke="#c8c8c8" stroke-width="1" stroke-dasharray="3 3" fill="none"/><path d="M934 272.5H1544" stroke="#778899" stroke-width="1"/><path d="M949.0 371V385M965.0 370V385M981.0 374V385M997.0 374V385M1013.0 377V385M1029.0 372V385M1045.0 374V385M1061.0 366V385M1077.0 372V385M1093.0 372V385M1109.0 370V385M1125.0 368V385M1141.0 363V385M1157.0 361V385M1173.0 367V385M1189.0 371V385M1205.0 368V385M1221.0 374V385M1237.0 369V385M1253.0 371V385M1269.0 379V385M1285.0 382V385M1301.0 381V385M1317.0 379V385M1333.0 371V385M1349.0 368V385M1365.0 369V385M1381.0 374V385M1397.0 377V385M1413.0 371V385M1429.0 372V385M1445.0 367V385M1461.0 373V385M1477.0 373V385M1493.0 374V385M1509.0 375V385M1525.0 372V385" stroke="#32cd32" stroke-width="2" fill="none"/><path d="M949.5 422V473M965.5 422V480M981.5 422V480M997.5 422V483M1013.5 422V487M1029.5 422V490M1045.5 422V496M1061.5 422V493M1077.5 422V494M1093.5 422V487M1109.5 422V470M1125.5 422V452M1141.5 422V431M1157.5 422V435M1173.5 422V437M1189.5 422V434M1205.5 422V426M1221.5 422V424M1237.5 422V424M1253.5 422V424M1269.5 422V423M1285.5 422V424M1301.5 422V422M1317.5 422V424M1333.5 422V422M1349.5 421V422M1365.5 410V422M1381.5 402V422M1397.5 400V422M1413.5 396V422M1429.5 400V422M1445.5 410V422M1461.5 412V422M1477.5 418V422M1493.5 417V422M1509.5 420V422M1525.5 422V422" stroke="#c0c0c0" stroke-width="1" fill="none"/><path d="M949.5 267V302" stroke="#00ff00" stroke-width="1"/><rect x="944.5" y="269.5" width="10" height="31" fill="#fff" stroke="#00ff00" stroke-width="1"/><path d="M965.5 288V310" stroke="#00ff00" stroke-width="1"/><rect x="960.5" y="291.5" width="10" height="8" fill="#000" stroke="#00ff00" stroke-width="1"/><path d="M981.5 291V324" stroke="#00ff00" stroke-width="1"/><rect x="976.5" y="291.5" width="10" height="25" fill="#fff" stroke="#00ff00" stroke-width="1"/><path d="M997.5 303V326" stroke="#00ff00" stroke-width="1"/><path d="M992 316.5H1003" stroke="#00ff00" stroke-width="1"/><path d="M1013.5 310V329" stroke="#00ff00" stroke-width="1"/><rect x="1008.5" y="316.5" width="10" height="10" fill="#fff" stroke="#00ff00" stroke-width="1"/><path d="M1029.5 324V346" stroke="#00ff00" stroke-width="1"/><rect x="1024.5" y="326.5" width="10" height="4" fill="#fff" stroke="#00ff00" stroke-width="1"/><path d="M1045.5 319V356" stroke="#00ff00" stroke-width="1"/><rect x="1040.5" y="330.5" width="10" height="21" fill="#fff" stroke="#00ff00" stroke-width="1"/><path d="M1061.5 304V355" stroke="#00ff00" stroke-width="1"/><rect x="1056.5" y="320.5" width="10" height="31" fill="#000" stroke="#00ff00" stroke-width="1"/><path d="M1077.5 294V345" stroke="#00ff00" stroke-width="1"/><rect x="1072.5" y="320.5" width="10" height="24" fill="#fff" stroke="#00ff00" stroke-width="1"/><path d="M1093.5 280V346" stroke="#00ff00" stroke-width="1"/><rect x="1088.5" y="281.5" width="10" height="63" fill="#000" stroke="#00ff00" stroke-width="1"/><path d="M1109.5 239V289" stroke="#00ff00" stroke-width="1"/><rect x="1104.5" y="247.5" width="10" height="35" fill="#000" stroke="#00ff00" stroke-width="1"/><path d="M1125.5 208V267" stroke="#00ff00" stroke-width="1"/><rect x="1120.5" y="215.5" width="10" height="33" fill="#000" stroke="#00ff00" stroke-width="1"/><path d="M1141.5 162V220" stroke="#00ff00" stroke-width="1"/><rect x="1136.5" y="184.5" width="10" height="32" fill="#000" stroke="#00ff00" stroke-width="1"/><path d="M1157.5 183V290" stroke="#00ff00" stroke-width="1"/><rect x="1152.5" y="183.5" width="10" height="107" fill="#fff" stroke="#00ff00" stroke-width="1"/><path d="M1173.5 270V303" stroke="#00ff00" stroke-width="1"/><rect x="1168.5" y="289.5" width="10" height="8" fill="#fff" stroke="#00ff00" stroke-width="1"/><path d="M1189.5 248V298" stroke="#00ff00" stroke-width="1"/><rect x="1184.5" y="258.5" width="10" height="39" fill="#000" stroke="#00ff00" stroke-width="1"/><path d="M1205.5 196V270" stroke="#00ff00" stroke-width="1"/><rect x="1200.5" y="241.5" width="10" height="18" fill="#000" stroke="#00ff00" stroke-width="1"/><path d="M1221.5 230V262" stroke="#00ff00" stroke-width="1"/><rect x="1216.5" y="241.5" width="10" height="16" fill="#fff" stroke="#00ff00" stroke-width="1"/><path d="M1237.5 237V270" stroke="#00ff00" stroke-width="1"/><rect x="1232.5" y="246.5" width="10" height="11" fill="#000" stroke="#00ff00" stroke-width="1"/><path d="M1253.5 231V263" stroke="#00ff00" stroke-width="1"/><rect x="1248.5" y="246.5" width="10" height="16" fill="#fff" stroke="#00ff00" stroke-width="1"/><path d="M1269.5 256V269" stroke="#00ff00" stroke-width="1"/><path d="M1264 263.5H1275" stroke="#00ff00" stroke-width="1"/><path d="M1285.5 262V278" stroke="#00ff00" stroke-width="1"/><rect x="1280.5" y="265.5" width="10" height="7" fill="#fff" stroke="#00ff00" stroke-width="1"/><path d="M1301.5 263V276" stroke="#00ff00" stroke-width="1"/><rect x="1296.5" y="264.5" width="10" height="8" fill="#000" stroke="#00ff00" stroke-width="1"/><path d="M1317.5 247V266" stroke="#00ff00" stroke-width="1"/><rect x="1312.5" y="256.5" width="10" height="9" fill="#000" stroke="#00ff00" stroke-width="1"/><path d="M1333.5 255V281" stroke="#00ff00" stroke-width="1"/><rect x="1328.5" y="256.5" width="10" height="9" fill="#fff" stroke="#00ff00" stroke-width="1"/><path d="M1349.5 233V272" stroke="#00ff00" stroke-width="1"/><rect x="1344.5" y="242.5" width="10" height="22" fill="#000" stroke="#00ff00" stroke-width="1"/><path d="M1365.5 208V242" stroke="#00ff00" stroke-width="1"/><rect x="1360.5" y="217.5" width="10" height="25" fill="#000" stroke="#00ff00" stroke-width="1"/><path d="M1381.5 214V238" stroke="#00ff00" stroke-width="1"/><rect x="1376.5" y="214.5" width="10" height="3" fill="#000" stroke="#00ff00" stroke-width="1"/><path d="M1397.5 212V226" stroke="#00ff00" stroke-width="1"/><rect x="1392.5" y="214.5" width="10" height="3" fill="#fff" stroke="#00ff00" stroke-width="1"/><path d="M1413.5 203V222" stroke="#00ff00" stroke-width="1"/><path d="M1408 217.5H1419" stroke="#00ff00" stroke-width="1"/><path d="M1429.5 213V242" stroke="#00ff00" stroke-width="1"/><rect x="1424.5" y="217.5" width="10" height="25" fill="#fff" stroke="#00ff00" stroke-width="1"/><path d="M1445.5 239V282" stroke="#00ff00" stroke-width="1"/><rect x="1440.5" y="243.5" width="10" height="38" fill="#fff" stroke="#00ff00" stroke-width="1"/><path d="M1461.5 244V282" stroke="#00ff00" stroke-width="1"/><rect x="1456.5" y="254.5" width="10" height="27" fill="#000" stroke="#00ff00" stroke-width="1"/><path d="M1477.5 247V298" stroke="#00ff00" stroke-width="1"/><rect x="1472.5" y="254.5" width="10" height="40" fill="#fff" stroke="#00ff00" stroke-width="1"/><path d="M1493.5 225V299" stroke="#00ff00" stroke-width="1"/><rect x="1488.5" y="237.5" width="10" height="57" fill="#000" stroke="#00ff00" stroke-width="1"/><path d="M1509.5 228V261" stroke="#00ff00" stroke-width="1"/><rect x="1504.5" y="238.5" width="10" height="16" fill="#fff" stroke="#00ff00" stroke-width="1"/><path d="M1525.5 247V280" stroke="#00ff00" stroke-width="1"/><rect x="1520.5" y="252.5" width="10" height="20" fill="#fff" stroke="#00ff00" stroke-width="1"/><path d="M934 478.5 L949.5 476.6 L965.5 474.6 L981.5 474.1 L997.5 474.1 L1013.5 475.6 L1029.5 477.5 L1045.5 480 L1061.5 483.3 L1077.5 485.3 L1093.5 486.2 L1109.5 485.6 L1125.5 483.3 L1141.5 477.5 L1157.5 471.8 L1173.5 464 L1189.5 457.3 L1205.5 451.5 L1221.5 442.8 L1237.5 436.1 L1253.5 431.3 L1269.5 427.8 L1285.5 425.9 L1301.5 425.1 L1317.5 423.6 L1333.5 422.2 L1349.5 420.7 L1365.5 419.3 L1381.5 416.8 L1397.5 414.3 L1413.5 412.4 L1429.5 410.1 L1445.5 409.1 L1461.5 408.5 L1477.5 408.5 L1493.5 408.5 L1509.5 409.1 L1525.5 410.5" stroke="#ff2020" stroke-width="1" fill="none" stroke-dasharray="3 3"/><path d="M934 456.3 L949.5 464 L965.5 473.7 L981.5 485.3 L997.5 486.2 L1013.5 490.1 L1029.5 489.1 L1045.5 490.1 L1061.5 482.4 L1077.5 475.6 L1093.5 457.3 L1109.5 438 L1125.5 413 L1141.5 403.3 L1157.5 403.3 L1173.5 425.5 L1189.5 452.5 L1205.5 467.9 L1221.5 469.8 L1237.5 462.1 L1253.5 456.3 L1269.5 457.3 L1285.5 467.9 L1301.5 477.5 L1317.5 479.5 L1333.5 472.7 L1349.5 454.4 L1365.5 436.1 L1381.5 418.7 L1397.5 406.2 L1413.5 402.4 L1429.5 412 L1445.5 433.2 L1461.5 462.1 L1477.5 482.4 L1493.5 480.4 L1509.5 467.9 L1525.5 452.5" stroke="#ff2020" stroke-width="1" fill="none" stroke-dasharray="3 3"/><path d="M934 457.3 L949.5 481 L965.5 486.6 L981.5 489.1 L997.5 485.6 L1013.5 495.3 L1029.5 489.1 L1045.5 491.4 L1061.5 468.3 L1077.5 470.2 L1093.5 429 L1109.5 415.8 L1125.5 393.7 L1141.5 396.6 L1157.5 421.6 L1173.5 450.5 L1189.5 478.5 L1205.5 473.7 L1221.5 459.2 L1237.5 452.5 L1253.5 456.3 L1269.5 463.1 L1285.5 479.5 L1301.5 487.2 L1317.5 470.8 L1333.5 457.9 L1349.5 433.2 L1365.5 412 L1381.5 402.4 L1397.5 400 L1413.5 403.3 L1429.5 428.4 L1445.5 469.8 L1461.5 489.1 L1477.5 490.1 L1493.5 463.1 L1509.5 454.4 L1525.5 438" stroke="#20b2aa" stroke-width="1" fill="none"/><rect x="933.5" y="149.5" width="611" height="236" fill="none" stroke="#fff" stroke-width="1"/><rect x="933.5" y="387.5" width="611" height="118" fill="none" stroke="#fff" stroke-width="1"/><path d="M1545 161.5H1549" stroke="#fff"/><text x="1550" y="164.5" font-size="8.8" fill="#fff" font-family="Liberation Sans">1.24060</text><path d="M1545 193.5H1549" stroke="#fff"/><text x="1550" y="196.5" font-size="8.8" fill="#fff" font-family="Liberation Sans">1.23820</text><path d="M1545 225.5H1549" stroke="#fff"/><text x="1550" y="228.5" font-size="8.8" fill="#fff" font-family="Liberation Sans">1.23580</text><path d="M1545 257.5H1549" stroke="#fff"/><text x="1550" y="260.5" font-size="8.8" fill="#fff" font-family="Liberation Sans">1.23340</text><path d="M1545 289.5H1549" stroke="#fff"/><text x="1550" y="292.5" font-size="8.8" fill="#fff" font-family="Liberation Sans">1.23100</text><path d="M1545 321.5H1549" stroke="#fff"/><text x="1550" y="324.5" font-size="8.8" fill="#fff" font-family="Liberation Sans">1.22860</text><path d="M1545 353.5H1549" stroke="#fff"/><text x="1550" y="356.5" font-size="8.8" fill="#fff" font-family="Liberation Sans">1.22620</text><path d="M1545 397.5H1549" stroke="#fff"/><text x="1550" y="400.5" font-size="8.8" fill="#fff" font-family="Liberation Sans">0.001197</text><path d="M1545 411.5H1549" stroke="#fff"/><text x="1550" y="414.5" font-size="8.8" fill="#fff" font-family="Liberation Sans">80.00</text><path d="M1545 422.5H1549" stroke="#fff"/><text x="1550" y="425.5" font-size="8.8" fill="#fff" font-family="Liberation Sans">0.000000</text><path d="M1545 481.5H1549" stroke="#fff"/><text x="1550" y="484.5" font-size="8.8" fill="#fff" font-family="Liberation Sans">20.00</text><path d="M1545 499.5H1549" stroke="#fff"/><text x="1550" y="502.5" font-size="8.8" fill="#fff" font-family="Liberation Sans">-0.002809</text><rect x="1545" y="266" width="39" height="12" fill="#778899"/><text x="1550" y="275.5" font-size="8.8" fill="#000" font-family="Liberation Sans">1.23228</text><path d="M933.5 506V510" stroke="#fff"/><text x="933" y="518" font-size="9.6" fill="#fff" font-family="Liberation Sans">9 May 2022</text><path d="M997.5 506V510" stroke="#fff"/><text x="997" y="518" font-size="9.6" fill="#fff" font-family="Liberation Sans">9 May 06:00</text><path d="M1061.5 506V510" stroke="#fff"/><text x="1061" y="518" font-size="9.6" fill="#fff" font-family="Liberation Sans">9 May 10:00</text><path d="M1125.5 506V510" stroke="#fff"/><text x="1125" y="518" font-size="9.6" fill="#fff" font-family="Liberation Sans">9 May 14:00</text><path d="M1189.5 506V510" stroke="#fff"/><text x="1189" y="518" font-size="9.6" fill="#fff" font-family="Liberation Sans">9 May 18:00</text><path d="M1253.5 506V510" stroke="#fff"/><text x="1253" y="518" font-size="9.6" fill="#fff" font-family="Liberation Sans">9 May 22:00</text><path d="M1317.5 506V510" stroke="#fff"/><text x="1317" y="518" font-size="9.6" fill="#fff" font-family="Liberation Sans">10 May 02:00</text><path d="M1381.5 506V510" stroke="#fff"/><text x="1381" y="518" font-size="9.6" fill="#fff" font-family="Liberation Sans">10 May 06:00</text><path d="M1445.5 506V510" stroke="#fff"/><text x="1445" y="518" font-size="9.6" fill="#fff" font-family="Liberation Sans">10 May 10:00</text><path d="M1509.5 506V510" stroke="#fff"/><text x="1509" y="518" font-size="9.6" fill="#fff" font-family="Liberation Sans">10 May 14:00</text><text x="980" y="164" font-size="10" fill="#fff" font-family="Liberation Sans" textLength="202.4" lengthAdjust="spacingAndGlyphs" xml:space="preserve">GBPUSD, H1:  Great Britain Pound vs US Dollar</text></svg><svg class="a" style="left:938px;top:154px;" width="38" height="12" viewBox="0 0 38 12"><rect x="0.5" y="0.5" width="14" height="10.5" fill="#fff" stroke="#e04848"/><path d="M7.5 0.5H14.5V11H7.5" fill="none" stroke="#1e78c8"/><path d="M2.5 3H6M2.5 5.5H6M2.5 8H6" stroke="#e04848"/><path d="M9 3H12.5M9 5.5H12.5M9 8H12.5" stroke="#1e78c8"/><path d="M21.5 1.5H24.5V5.5H28V10.8H21.5Z" fill="#fcd4d0" stroke="#e04848"/><path d="M30 5.5H32V1.5H36V10.8H30Z" fill="#bfe0fb" stroke="#1e78c8"/><rect x="26" y="0.3" width="5" height="2.7" fill="#d8d8d8"/></svg><div class="a" style="left:933px;top:254px;width:6px;height:16px;background:#fff;border:1px solid #0f0;border-left:none;box-sizing:border-box;"></div><svg class="a" style="left:936px;top:389px" width="240" height="14"><text x="0.7" y="10" font-size="10" fill="#fff" font-family="Liberation Sans" textLength="252.6" lengthAdjust="spacingAndGlyphs">MACD(12,26,9) 0.000011 0.000399 Stoch(5,3,3) 57.28 45.43</text></svg>
<div class="a" style="left:247px;top:534px;width:676px;height:449px;background:#f0f0f0;border:1px solid #707070;box-sizing:border-box;"></div>
<svg class="a" style="left:258px;top:541px;" width="12" height="14" viewBox="0 0 12 14"><path d="M3 0V14M9 1V13" stroke="#18a818" stroke-width="1.2"/><rect x="0.8" y="4" width="4.4" height="6" fill="#e6f6e6" stroke="#18a818" stroke-width="1.2"/><rect x="6.8" y="3" width="4.4" height="8" fill="#e6f6e6" stroke="#18a818" stroke-width="1.2"/></svg>
<div class="t" style="left:276px;top:540px;--w:66;font-size:12.5px;color:#444;">EURUSD,M30</div>
<div class="a" style="left:820px;top:554px;width:10px;height:1px;background:#aaa;"></div>
<div class="a" style="left:856px;top:546px;width:10px;height:10px;border:1px solid #aaa;box-sizing:border-box;"></div>
<svg class="a" style="left:892px;top:546px;" width="10" height="10" viewBox="0 0 10 10"><path d="M0.5 0.5L9.5 9.5M9.5 0.5L0.5 9.5" stroke="#aaa" stroke-width="1.1"/></svg>
<svg class="a" style="left:251px;top:561px" width="666" height="416" viewBox="251 561 666 416" shape-rendering="crispEdges"><rect x="251" y="561" width="664" height="414" fill="#000"/><rect x="251" y="561" width="664" height="2" fill="#6a6a6a"/><rect x="251" y="561" width="2" height="414" fill="#6a6a6a"/><rect x="251" y="561" width="664" height="1" fill="#a0a0a0"/><rect x="251" y="561" width="1" height="414" fill="#a0a0a0"/><rect x="251" y="975" width="666" height="2" fill="#fff"/><rect x="915" y="561" width="2" height="416" fill="#fff"/><path d="M287.5 568V758M319.5 568V758M351.5 568V758M383.5 568V758M415.5 568V758M447.5 568V758M479.5 568V758M511.5 568V758M543.5 568V758M575.5 568V758M607.5 568V758M639.5 568V758M671.5 568V758M703.5 568V758M735.5 568V758M767.5 568V758M799.5 568V758M831.5 568V758M287.5 761V853M319.5 761V853M351.5 761V853M383.5 761V853M415.5 761V853M447.5 761V853M479.5 761V853M511.5 761V853M543.5 761V853M575.5 761V853M607.5 761V853M639.5 761V853M671.5 761V853M703.5 761V853M735.5 761V853M767.5 761V853M799.5 761V853M831.5 761V853M287.5 856V954M319.5 856V954M351.5 856V954M383.5 856V954M415.5 856V954M447.5 856V954M479.5 856V954M511.5 856V954M543.5 856V954M575.5 856V954M607.5 856V954M639.5 856V954M671.5 856V954M703.5 856V954M735.5 856V954M767.5 856V954M799.5 856V954M831.5 856V954" stroke="#8a97a8" stroke-width="1" stroke-dasharray="3 3" fill="none"/><path d="M256 596.5H862" stroke="#8a97a8" stroke-width="1" stroke-dasharray="3 3" fill="none"/><path d="M256 628.5H862" stroke="#8a97a8" stroke-width="1" stroke-dasharray="3 3" fill="none"/><path d="M256 661.5H862" stroke="#8a97a8" stroke-width="1" stroke-dasharray="3 3" fill="none"/><path d="M256 693.5H862" stroke="#8a97a8" stroke-width="1" stroke-dasharray="3 3" fill="none"/><path d="M256 726.5H862" stroke="#8a97a8" stroke-width="1" stroke-dasharray="3 3" fill="none"/><path d="M256 828.5H862" stroke="#8a97a8" stroke-width="1" stroke-dasharray="3 3" fill="none"/><path d="M256 875.5H862" stroke="#c8c8c8" stroke-width="1" stroke-dasharray="3 3" fill="none"/><path d="M256 934.5H862" stroke="#c8c8c8" stroke-width="1" stroke-dasharray="3 3" fill="none"/><path d="M256 687.5H862" stroke="#778899" stroke-width="1"/><path d="M287.5 775V828M319.5 777V828M351.5 784V828M383.5 794V828M415.5 801V828M447.5 809V828M479.5 807V828M511.5 812V828M543.5 826V828M575.5 828V845M607.5 828V845M639.5 828V843M671.5 828V834M703.5 828V845M735.5 828V845" stroke="#c0c0c0" stroke-width="1" fill="none"/><path d="M319.5 602V646" stroke="#00ff00" stroke-width="1"/><rect x="308.5" y="611.5" width="22" height="35" fill="#fff" stroke="#00ff00" stroke-width="1"/><path d="M351.5 640V671" stroke="#00ff00" stroke-width="1"/><rect x="340.5" y="645.5" width="22" height="24" fill="#fff" stroke="#00ff00" stroke-width="1"/><path d="M383.5 643V699" stroke="#00ff00" stroke-width="1"/><rect x="372.5" y="656.5" width="22" height="11" fill="#000" stroke="#00ff00" stroke-width="1"/><path d="M415.5 604V678" stroke="#00ff00" stroke-width="1"/><rect x="404.5" y="656.5" width="22" height="22" fill="#fff" stroke="#00ff00" stroke-width="1"/><path d="M447.5 630V689" stroke="#00ff00" stroke-width="1"/><rect x="436.5" y="672.5" width="22" height="6" fill="#000" stroke="#00ff00" stroke-width="1"/><path d="M479.5 614V672" stroke="#00ff00" stroke-width="1"/><rect x="468.5" y="626.5" width="22" height="46" fill="#000" stroke="#00ff00" stroke-width="1"/><path d="M511.5 614V674" stroke="#00ff00" stroke-width="1"/><rect x="500.5" y="626.5" width="22" height="39" fill="#fff" stroke="#00ff00" stroke-width="1"/><path d="M543.5 656V747" stroke="#00ff00" stroke-width="1"/><rect x="532.5" y="665.5" width="22" height="73" fill="#fff" stroke="#00ff00" stroke-width="1"/><path d="M575.5 704V752" stroke="#00ff00" stroke-width="1"/><rect x="564.5" y="723.5" width="22" height="16" fill="#000" stroke="#00ff00" stroke-width="1"/><path d="M607.5 688V743" stroke="#00ff00" stroke-width="1"/><rect x="596.5" y="690.5" width="22" height="34" fill="#000" stroke="#00ff00" stroke-width="1"/><path d="M639.5 658V713" stroke="#00ff00" stroke-width="1"/><rect x="628.5" y="665.5" width="22" height="25" fill="#000" stroke="#00ff00" stroke-width="1"/><path d="M671.5 645V702" stroke="#00ff00" stroke-width="1"/><rect x="660.5" y="665.5" width="22" height="28" fill="#fff" stroke="#00ff00" stroke-width="1"/><path d="M703.5 668V708" stroke="#00ff00" stroke-width="1"/><rect x="692.5" y="678.5" width="22" height="15" fill="#000" stroke="#00ff00" stroke-width="1"/><path d="M735.5 663V708" stroke="#00ff00" stroke-width="1"/><rect x="724.5" y="678.5" width="22" height="9" fill="#fff" stroke="#00ff00" stroke-width="1"/><path d="M255.6 776.5 L287.3 774.4 L319.4 773.1 L351.6 774.0 L383.3 775.2 L415.4 778.2 L447.5 782.4 L479.2 787.1 L511.4 792.2 L543.5 799.3 L575.2 807.0 L607.4 814.1 L639.5 820.9 L671.2 826.0 L703.4 830.2 L735.5 833.6" stroke="#ff2020" stroke-width="1" fill="none" stroke-dasharray="3 3"/><path d="M255.6 873.8 L287.3 874.6 L319.4 882.2 L351.6 902.1 L383.3 923.2 L415.4 933.8 L447.5 933.8 L479.2 927.5 L511.4 921.1 L543.5 923.2 L575.2 926.6 L607.4 931.7 L639.5 927.5 L671.2 916.9 L703.4 907.6 L735.5 906.3" stroke="#ff2020" stroke-width="1" fill="none" stroke-dasharray="3 3"/><path d="M255.6 873.8 L287.3 876.7 L319.4 897.9 L351.6 928.7 L383.3 938.0 L415.4 933.8 L447.5 928.7 L479.2 919.0 L511.4 916.9 L543.5 925.3 L575.2 937.2 L607.4 931.7 L639.5 913.9 L671.2 905.5 L703.4 902.1 L735.5 906.3" stroke="#20b2aa" stroke-width="1" fill="none"/><rect x="255.5" y="567.5" width="607" height="191" fill="none" stroke="#fff" stroke-width="1"/><rect x="255.5" y="760.5" width="607" height="93" fill="none" stroke="#fff" stroke-width="1"/><rect x="255.5" y="855.5" width="607" height="99" fill="none" stroke="#fff" stroke-width="1"/><path d="M863 596.5H867" stroke="#fff"/><text x="868" y="599.5" font-size="8.8" fill="#fff" font-family="Liberation Sans">1.05805</text><path d="M863 628.5H867" stroke="#fff"/><text x="868" y="631.5" font-size="8.8" fill="#fff" font-family="Liberation Sans">1.05710</text><path d="M863 661.5H867" stroke="#fff"/><text x="868" y="664.5" font-size="8.8" fill="#fff" font-family="Liberation Sans">1.05615</text><path d="M863 693.5H867" stroke="#fff"/><text x="868" y="696.5" font-size="8.8" fill="#fff" font-family="Liberation Sans">1.05520</text><path d="M863 726.5H867" stroke="#fff"/><text x="868" y="729.5" font-size="8.8" fill="#fff" font-family="Liberation Sans">1.05425</text><path d="M863 765.5H867" stroke="#fff"/><text x="868" y="768.5" font-size="8.8" fill="#fff" font-family="Liberation Sans">0.000821</text><path d="M863 828.5H867" stroke="#fff"/><text x="868" y="831.5" font-size="8.8" fill="#fff" font-family="Liberation Sans">0.000000</text><path d="M863 847.5H867" stroke="#fff"/><text x="868" y="850.5" font-size="8.8" fill="#fff" font-family="Liberation Sans">-0.000310</text><path d="M863 860.5H867" stroke="#fff"/><text x="868" y="863.5" font-size="8.8" fill="#fff" font-family="Liberation Sans">100.00</text><path d="M863 875.5H867" stroke="#fff"/><text x="868" y="878.5" font-size="8.8" fill="#fff" font-family="Liberation Sans">80.00</text><path d="M863 934.5H867" stroke="#fff"/><text x="868" y="937.5" font-size="8.8" fill="#fff" font-family="Liberation Sans">20.00</text><path d="M863 948.5H867" stroke="#fff"/><text x="868" y="951.5" font-size="8.8" fill="#fff" font-family="Liberation Sans">0.00</text><rect x="863" y="681" width="39" height="12" fill="#778899"/><text x="868" y="690.5" font-size="8.8" fill="#000" font-family="Liberation Sans">1.05537</text><path d="M255.5 955V959" stroke="#fff"/><text x="255" y="967" font-size="9.6" fill="#fff" font-family="Liberation Sans">10 May 2022</text><path d="M319.5 955V959" stroke="#fff"/><text x="319" y="967" font-size="9.6" fill="#fff" font-family="Liberation Sans">10 May 09:00</text><path d="M383.5 955V959" stroke="#fff"/><text x="383" y="967" font-size="9.6" fill="#fff" font-family="Liberation Sans">10 May 10:00</text><path d="M447.5 955V959" stroke="#fff"/><text x="447" y="967" font-size="9.6" fill="#fff" font-family="Liberation Sans">10 May 11:00</text><path d="M511.5 955V959" stroke="#fff"/><text x="511" y="967" font-size="9.6" fill="#fff" font-family="Liberation Sans">10 May 12:00</text><path d="M575.5 955V959" stroke="#fff"/><text x="575" y="967" font-size="9.6" fill="#fff" font-family="Liberation Sans">10 May 13:00</text><path d="M639.5 955V959" stroke="#fff"/><text x="639" y="967" font-size="9.6" fill="#fff" font-family="Liberation Sans">10 May 14:00</text><path d="M703.5 955V959" stroke="#fff"/><text x="703" y="967" font-size="9.6" fill="#fff" font-family="Liberation Sans">10 May 15:00</text><text x="303" y="582" font-size="10" fill="#fff" font-family="Liberation Sans" textLength="145.7" lengthAdjust="spacingAndGlyphs" xml:space="preserve">EURUSD, M30:  Euro vs US Dollar</text></svg><svg class="a" style="left:256px;top:762px" width="300" height="110"><text x="2.5" y="10" font-size="10" fill="#fff" font-family="Liberation Sans" textLength="153.5" lengthAdjust="spacingAndGlyphs">MACD(12,26,9) -0.000206 -0.000089</text><text x="2.5" y="105" font-size="10" fill="#fff" font-family="Liberation Sans" textLength="101.5" lengthAdjust="spacingAndGlyphs">Stoch(8,3,3) 47.73 49.31</text></svg><svg class="a" style="left:738px;top:567px" width="12" height="6"><path d="M0 0H11L5.5 5Z" fill="#8a97a8"/></svg>
<div class="a" style="left:924px;top:534px;width:680px;height:448px;background:#f0f0f0;border:1px solid #707070;box-sizing:border-box;"></div>
<svg class="a" style="left:935px;top:541px;" width="12" height="14" viewBox="0 0 12 14"><path d="M3 0V14M9 1V13" stroke="#18a818" stroke-width="1.2"/><rect x="0.8" y="4" width="4.4" height="6" fill="#e6f6e6" stroke="#18a818" stroke-width="1.2"/><rect x="6.8" y="3" width="4.4" height="8" fill="#e6f6e6" stroke="#18a818" stroke-width="1.2"/></svg>
<div class="t" style="left:953px;top:540px;--w:61.6;font-size:12.5px;color:#444;">USDCHF,H1</div>
<div class="a" style="left:1501px;top:554px;width:10px;height:1px;background:#aaa;"></div>
<div class="a" style="left:1537px;top:546px;width:10px;height:10px;border:1px solid #aaa;box-sizing:border-box;"></div>
<svg class="a" style="left:1573px;top:546px;" width="10" height="10" viewBox="0 0 10 10"><path d="M0.5 0.5L9.5 9.5M9.5 0.5L0.5 9.5" stroke="#aaa" stroke-width="1.1"/></svg>
<svg class="a" style="left:930px;top:562px" width="669" height="414" viewBox="930 562 669 414" shape-rendering="crispEdges"><rect x="930" y="562" width="667" height="412" fill="#000"/><rect x="930" y="562" width="667" height="2" fill="#6a6a6a"/><rect x="930" y="562" width="2" height="412" fill="#6a6a6a"/><rect x="930" y="562" width="667" height="1" fill="#a0a0a0"/><rect x="930" y="562" width="1" height="412" fill="#a0a0a0"/><rect x="930" y="974" width="669" height="2" fill="#fff"/><rect x="1597" y="562" width="2" height="414" fill="#fff"/><path d="M966.5 567V757M998.5 567V757M1030.5 567V757M1062.5 567V757M1094.5 567V757M1126.5 567V757M1158.5 567V757M1190.5 567V757M1222.5 567V757M1254.5 567V757M1286.5 567V757M1318.5 567V757M1350.5 567V757M1382.5 567V757M1414.5 567V757M1446.5 567V757M1478.5 567V757M1510.5 567V757M1542.5 567V757M966.5 760V851M998.5 760V851M1030.5 760V851M1062.5 760V851M1094.5 760V851M1126.5 760V851M1158.5 760V851M1190.5 760V851M1222.5 760V851M1254.5 760V851M1286.5 760V851M1318.5 760V851M1350.5 760V851M1382.5 760V851M1414.5 760V851M1446.5 760V851M1478.5 760V851M1510.5 760V851M1542.5 760V851M966.5 855V952M998.5 855V952M1030.5 855V952M1062.5 855V952M1094.5 855V952M1126.5 855V952M1158.5 855V952M1190.5 855V952M1222.5 855V952M1254.5 855V952M1286.5 855V952M1318.5 855V952M1350.5 855V952M1382.5 855V952M1414.5 855V952M1446.5 855V952M1478.5 855V952M1510.5 855V952M1542.5 855V952" stroke="#8a97a8" stroke-width="1" stroke-dasharray="3 3" fill="none"/><path d="M935 595.5H1543" stroke="#8a97a8" stroke-width="1" stroke-dasharray="3 3" fill="none"/><path d="M935 627.5H1543" stroke="#8a97a8" stroke-width="1" stroke-dasharray="3 3" fill="none"/><path d="M935 660.5H1543" stroke="#8a97a8" stroke-width="1" stroke-dasharray="3 3" fill="none"/><path d="M935 725.5H1543" stroke="#8a97a8" stroke-width="1" stroke-dasharray="3 3" fill="none"/><path d="M935 874.5H1543" stroke="#c8c8c8" stroke-width="1" stroke-dasharray="3 3" fill="none"/><path d="M935 933.5H1543" stroke="#c8c8c8" stroke-width="1" stroke-dasharray="3 3" fill="none"/><path d="M935 693.5H1543" stroke="#778899" stroke-width="1"/><path d="M950.0 747V757M966.0 746V757M982.0 746V757M998.0 751V757M1014.0 752V757M1030.0 749V757M1046.0 745V757M1062.0 737V757M1078.0 744V757M1094.0 746V757M1110.0 745V757M1126.0 745V757M1142.0 740V757M1158.0 742V757M1174.0 742V757M1190.0 744V757M1206.0 746V757M1222.0 749V757M1238.0 750V757M1254.0 748V757M1270.0 753V757M1286.0 756V757M1302.0 754V757M1318.0 753V757M1334.0 745V757M1350.0 747V757M1366.0 749V757M1382.0 752V757M1398.0 754V757M1414.0 748V757M1430.0 745V757M1446.0 742V757M1462.0 745V757M1478.0 745V757M1494.0 746V757M1510.0 747V757M1526.0 742V757" stroke="#32cd32" stroke-width="2" fill="none"/><path d="M950.5 799V851M966.5 796V851M982.5 791V851M998.5 788V851M1014.5 783V851M1030.5 776V851M1046.5 774V851M1062.5 774V851M1078.5 774V851M1094.5 774V851M1110.5 776V851M1126.5 776V851M1142.5 791V851M1158.5 788V851M1174.5 778V851M1190.5 782V851M1206.5 790V851M1222.5 793V851M1238.5 797V851M1254.5 800V851M1270.5 802V851M1286.5 805V851M1302.5 807V851M1318.5 811V851M1334.5 815V851M1350.5 819V851M1366.5 827V851M1382.5 834V851M1398.5 839V851M1414.5 842V851M1430.5 844V851M1446.5 841V851M1462.5 840V851M1478.5 825V851M1494.5 819V851M1510.5 823V851M1526.5 835V851" stroke="#c0c0c0" stroke-width="1" fill="none"/><path d="M950.5 694V726" stroke="#00ff00" stroke-width="1"/><rect x="945.5" y="697.5" width="10" height="25" fill="#000" stroke="#00ff00" stroke-width="1"/><path d="M966.5 690V709" stroke="#00ff00" stroke-width="1"/><rect x="961.5" y="697.5" width="10" height="9" fill="#fff" stroke="#00ff00" stroke-width="1"/><path d="M982.5 681V706" stroke="#00ff00" stroke-width="1"/><rect x="977.5" y="684.5" width="10" height="22" fill="#000" stroke="#00ff00" stroke-width="1"/><path d="M998.5 676V696" stroke="#00ff00" stroke-width="1"/><path d="M993 685.5H1004" stroke="#00ff00" stroke-width="1"/><path d="M1014.5 668V692" stroke="#00ff00" stroke-width="1"/><rect x="1009.5" y="670.5" width="10" height="15" fill="#000" stroke="#00ff00" stroke-width="1"/><path d="M1030.5 646V680" stroke="#00ff00" stroke-width="1"/><rect x="1025.5" y="647.5" width="10" height="23" fill="#000" stroke="#00ff00" stroke-width="1"/><path d="M1046.5 629V662" stroke="#00ff00" stroke-width="1"/><path d="M1041 647.5H1052" stroke="#00ff00" stroke-width="1"/><path d="M1062.5 630V669" stroke="#00ff00" stroke-width="1"/><rect x="1057.5" y="646.5" width="10" height="8" fill="#fff" stroke="#00ff00" stroke-width="1"/><path d="M1078.5 639V670" stroke="#00ff00" stroke-width="1"/><rect x="1073.5" y="646.5" width="10" height="8" fill="#000" stroke="#00ff00" stroke-width="1"/><path d="M1094.5 641V683" stroke="#00ff00" stroke-width="1"/><rect x="1089.5" y="645.5" width="10" height="37" fill="#fff" stroke="#00ff00" stroke-width="1"/><path d="M1110.5 660V692" stroke="#00ff00" stroke-width="1"/><rect x="1105.5" y="662.5" width="10" height="20" fill="#000" stroke="#00ff00" stroke-width="1"/><path d="M1126.5 646V683" stroke="#00ff00" stroke-width="1"/><rect x="1121.5" y="662.5" width="10" height="2" fill="#fff" stroke="#00ff00" stroke-width="1"/><path d="M1142.5 660V720" stroke="#00ff00" stroke-width="1"/><rect x="1137.5" y="662.5" width="10" height="44" fill="#fff" stroke="#00ff00" stroke-width="1"/><path d="M1158.5 642V712" stroke="#00ff00" stroke-width="1"/><rect x="1153.5" y="645.5" width="10" height="61" fill="#000" stroke="#00ff00" stroke-width="1"/><path d="M1174.5 595V648" stroke="#00ff00" stroke-width="1"/><rect x="1169.5" y="596.5" width="10" height="51" fill="#000" stroke="#00ff00" stroke-width="1"/><path d="M1190.5 596V670" stroke="#00ff00" stroke-width="1"/><rect x="1185.5" y="597.5" width="10" height="61" fill="#fff" stroke="#00ff00" stroke-width="1"/><path d="M1206.5 654V700" stroke="#00ff00" stroke-width="1"/><rect x="1201.5" y="657.5" width="10" height="14" fill="#fff" stroke="#00ff00" stroke-width="1"/><path d="M1222.5 638V673" stroke="#00ff00" stroke-width="1"/><rect x="1217.5" y="654.5" width="10" height="17" fill="#000" stroke="#00ff00" stroke-width="1"/><path d="M1238.5 642V664" stroke="#00ff00" stroke-width="1"/><rect x="1233.5" y="652.5" width="10" height="7" fill="#fff" stroke="#00ff00" stroke-width="1"/><path d="M1254.5 652V672" stroke="#00ff00" stroke-width="1"/><path d="M1249 658.5H1260" stroke="#00ff00" stroke-width="1"/><path d="M1270.5 640V660" stroke="#00ff00" stroke-width="1"/><rect x="1265.5" y="643.5" width="10" height="16" fill="#000" stroke="#00ff00" stroke-width="1"/><path d="M1286.5 642V654" stroke="#00ff00" stroke-width="1"/><rect x="1281.5" y="643.5" width="10" height="11" fill="#fff" stroke="#00ff00" stroke-width="1"/><path d="M1302.5 643V653" stroke="#00ff00" stroke-width="1"/><rect x="1297.5" y="645.5" width="10" height="8" fill="#000" stroke="#00ff00" stroke-width="1"/><path d="M1318.5 645V662" stroke="#00ff00" stroke-width="1"/><rect x="1313.5" y="645.5" width="10" height="10" fill="#fff" stroke="#00ff00" stroke-width="1"/><path d="M1334.5 645V671" stroke="#00ff00" stroke-width="1"/><rect x="1329.5" y="655.5" width="10" height="7" fill="#fff" stroke="#00ff00" stroke-width="1"/><path d="M1350.5 657V676" stroke="#00ff00" stroke-width="1"/><rect x="1345.5" y="662.5" width="10" height="4" fill="#fff" stroke="#00ff00" stroke-width="1"/><path d="M1366.5 658V684" stroke="#00ff00" stroke-width="1"/><rect x="1361.5" y="668.5" width="10" height="11" fill="#fff" stroke="#00ff00" stroke-width="1"/><path d="M1382.5 675V685" stroke="#00ff00" stroke-width="1"/><rect x="1377.5" y="679.5" width="10" height="5" fill="#fff" stroke="#00ff00" stroke-width="1"/><path d="M1398.5 676V688" stroke="#00ff00" stroke-width="1"/><rect x="1393.5" y="679.5" width="10" height="5" fill="#000" stroke="#00ff00" stroke-width="1"/><path d="M1414.5 676V692" stroke="#00ff00" stroke-width="1"/><rect x="1409.5" y="680.5" width="10" height="2" fill="#fff" stroke="#00ff00" stroke-width="1"/><path d="M1430.5 663V691" stroke="#00ff00" stroke-width="1"/><rect x="1425.5" y="668.5" width="10" height="15" fill="#000" stroke="#00ff00" stroke-width="1"/><path d="M1446.5 649V674" stroke="#00ff00" stroke-width="1"/><rect x="1441.5" y="650.5" width="10" height="18" fill="#000" stroke="#00ff00" stroke-width="1"/><path d="M1462.5 640V665" stroke="#00ff00" stroke-width="1"/><rect x="1457.5" y="650.5" width="10" height="3" fill="#fff" stroke="#00ff00" stroke-width="1"/><path d="M1478.5 585V654" stroke="#00ff00" stroke-width="1"/><rect x="1473.5" y="588.5" width="10" height="65" fill="#000" stroke="#00ff00" stroke-width="1"/><path d="M1494.5 579V605" stroke="#00ff00" stroke-width="1"/><rect x="1489.5" y="587.5" width="10" height="16" fill="#fff" stroke="#00ff00" stroke-width="1"/><path d="M1510.5 602V661" stroke="#00ff00" stroke-width="1"/><rect x="1505.5" y="602.5" width="10" height="48" fill="#fff" stroke="#00ff00" stroke-width="1"/><path d="M1526.5 642V696" stroke="#00ff00" stroke-width="1"/><rect x="1521.5" y="650.5" width="10" height="44" fill="#fff" stroke="#00ff00" stroke-width="1"/><path d="M935 809.6 L950.5 807.4 L966.5 805.3 L982.5 803.2 L998.5 800.8 L1014.5 798.4 L1030.5 795.5 L1046.5 790.7 L1062.5 786.8 L1078.5 782 L1094.5 779.1 L1110.5 777.2 L1126.5 776.6 L1142.5 776.6 L1158.5 777.7 L1174.5 777.7 L1190.5 778.5 L1206.5 782 L1222.5 783.9 L1238.5 785.8 L1254.5 789.7 L1270.5 792 L1286.5 793.6 L1302.5 795.5 L1318.5 799.7 L1334.5 803.2 L1350.5 806.7 L1366.5 810.9 L1382.5 813.8 L1398.5 817.7 L1414.5 822.5 L1430.5 826.7 L1446.5 830.8 L1462.5 834 L1478.5 835 L1494.5 835 L1510.5 834.4 L1526.5 834.4" stroke="#ff2020" stroke-width="1" fill="none" stroke-dasharray="3 3"/><path d="M935 887 L950.5 881.9 L966.5 875.5 L982.5 868 L998.5 862 L1014.5 858 L1030.5 857 L1046.5 860 L1062.5 866.4 L1078.5 874.1 L1094.5 886.7 L1110.5 896.1 L1126.5 910.2 L1142.5 914.6 L1158.5 912.1 L1174.5 898.6 L1190.5 885.7 L1206.5 881.3 L1222.5 891.9 L1238.5 901.5 L1254.5 909.2 L1270.5 908.3 L1286.5 902.5 L1302.5 890.9 L1318.5 886.1 L1334.5 887.6 L1350.5 902.5 L1366.5 916 L1382.5 930.8 L1398.5 938.2 L1414.5 940.1 L1430.5 930.4 L1446.5 913.1 L1462.5 891.9 L1478.5 875.5 L1494.5 867.8 L1510.5 870.3 L1526.5 889" stroke="#ff2020" stroke-width="1" fill="none" stroke-dasharray="3 3"/><path d="M935 888 L950.5 864 L966.5 857 L982.5 856 L998.5 856 L1014.5 856 L1030.5 857 L1046.5 862 L1062.5 874.1 L1078.5 881.3 L1094.5 904 L1110.5 909.2 L1126.5 919.4 L1142.5 918.5 L1158.5 901.5 L1174.5 879.4 L1190.5 874.5 L1206.5 890.9 L1222.5 907.3 L1238.5 910.2 L1254.5 910.2 L1270.5 902.5 L1286.5 895.4 L1302.5 873.6 L1318.5 890 L1334.5 897.7 L1350.5 917.9 L1366.5 932.4 L1382.5 941 L1398.5 942.4 L1414.5 937.2 L1430.5 915 L1446.5 887.1 L1462.5 871.6 L1478.5 862.6 L1494.5 867.8 L1510.5 883.8 L1526.5 917.9" stroke="#20b2aa" stroke-width="1" fill="none"/><rect x="934.5" y="566.5" width="609" height="191" fill="none" stroke="#fff" stroke-width="1"/><rect x="934.5" y="759.5" width="609" height="92" fill="none" stroke="#fff" stroke-width="1"/><rect x="934.5" y="854.5" width="609" height="98" fill="none" stroke="#fff" stroke-width="1"/><path d="M1544 595.5H1548" stroke="#fff"/><text x="1549" y="598.5" font-size="8.8" fill="#fff" font-family="Liberation Sans">0.99650</text><path d="M1544 627.5H1548" stroke="#fff"/><text x="1549" y="630.5" font-size="8.8" fill="#fff" font-family="Liberation Sans">0.99460</text><path d="M1544 660.5H1548" stroke="#fff"/><text x="1549" y="663.5" font-size="8.8" fill="#fff" font-family="Liberation Sans">0.99270</text><path d="M1544 725.5H1548" stroke="#fff"/><text x="1549" y="728.5" font-size="8.8" fill="#fff" font-family="Liberation Sans">0.98890</text><path d="M1544 764.5H1548" stroke="#fff"/><text x="1549" y="767.5" font-size="8.8" fill="#fff" font-family="Liberation Sans">0.002337</text><path d="M1544 846.5H1548" stroke="#fff"/><text x="1549" y="849.5" font-size="8.8" fill="#fff" font-family="Liberation Sans">0.000141</text><path d="M1544 859.5H1548" stroke="#fff"/><text x="1549" y="862.5" font-size="8.8" fill="#fff" font-family="Liberation Sans">100.00</text><path d="M1544 874.5H1548" stroke="#fff"/><text x="1549" y="877.5" font-size="8.8" fill="#fff" font-family="Liberation Sans">80.00</text><path d="M1544 933.5H1548" stroke="#fff"/><text x="1549" y="936.5" font-size="8.8" fill="#fff" font-family="Liberation Sans">20.00</text><path d="M1544 947.5H1548" stroke="#fff"/><text x="1549" y="950.5" font-size="8.8" fill="#fff" font-family="Liberation Sans">0.00</text><rect x="1544" y="687" width="39" height="12" fill="#778899"/><text x="1549" y="696.5" font-size="8.8" fill="#000" font-family="Liberation Sans">0.99069</text><path d="M933.5 953V957" stroke="#fff"/><text x="933" y="965" font-size="9.6" fill="#fff" font-family="Liberation Sans">9 May 2022</text><path d="M998.5 953V957" stroke="#fff"/><text x="998" y="965" font-size="9.6" fill="#fff" font-family="Liberation Sans">9 May 06:00</text><path d="M1062.5 953V957" stroke="#fff"/><text x="1062" y="965" font-size="9.6" fill="#fff" font-family="Liberation Sans">9 May 10:00</text><path d="M1126.5 953V957" stroke="#fff"/><text x="1126" y="965" font-size="9.6" fill="#fff" font-family="Liberation Sans">9 May 14:00</text><path d="M1190.5 953V957" stroke="#fff"/><text x="1190" y="965" font-size="9.6" fill="#fff" font-family="Liberation Sans">9 May 18:00</text><path d="M1254.5 953V957" stroke="#fff"/><text x="1254" y="965" font-size="9.6" fill="#fff" font-family="Liberation Sans">9 May 22:00</text><path d="M1318.5 953V957" stroke="#fff"/><text x="1318" y="965" font-size="9.6" fill="#fff" font-family="Liberation Sans">10 May 02:00</text><path d="M1382.5 953V957" stroke="#fff"/><text x="1382" y="965" font-size="9.6" fill="#fff" font-family="Liberation Sans">10 May 06:00</text><path d="M1446.5 953V957" stroke="#fff"/><text x="1446" y="965" font-size="9.6" fill="#fff" font-family="Liberation Sans">10 May 10:00</text><path d="M1510.5 953V957" stroke="#fff"/><text x="1510" y="965" font-size="9.6" fill="#fff" font-family="Liberation Sans">10 May 14:00</text><text x="980" y="581" font-size="10" fill="#fff" font-family="Liberation Sans" textLength="173.3" lengthAdjust="spacingAndGlyphs" xml:space="preserve">USDCHF, H1:  US Dollar vs Swiss Franc</text></svg><svg class="a" style="left:938px;top:572px;" width="38" height="12" viewBox="0 0 38 12"><rect x="0.5" y="0.5" width="14" height="10.5" fill="#fff" stroke="#e04848"/><path d="M7.5 0.5H14.5V11H7.5" fill="none" stroke="#1e78c8"/><path d="M2.5 3H6M2.5 5.5H6M2.5 8H6" stroke="#e04848"/><path d="M9 3H12.5M9 5.5H12.5M9 8H12.5" stroke="#1e78c8"/><path d="M21.5 1.5H24.5V5.5H28V10.8H21.5Z" fill="#fcd4d0" stroke="#e04848"/><path d="M30 5.5H32V1.5H36V10.8H30Z" fill="#bfe0fb" stroke="#1e78c8"/><rect x="26" y="0.3" width="5" height="2.7" fill="#d8d8d8"/></svg><div class="a" style="left:934px;top:722px;width:7px;height:9px;background:#000;border:1px solid #0f0;border-left:none;box-sizing:border-box;"></div><svg class="a" style="left:936px;top:761px" width="300" height="110"><text x="1" y="10" font-size="10" fill="#fff" font-family="Liberation Sans" textLength="148.5" lengthAdjust="spacingAndGlyphs">MACD(12,26,9) 0.000547 0.000559</text><text x="1" y="105" font-size="10" fill="#fff" font-family="Liberation Sans" textLength="102.7" lengthAdjust="spacingAndGlyphs">Stoch(5,3,3) 35.22 63.47</text></svg>
<div class="a" style="left:249px;top:985px;width:1357px;height:20px;background:#f0f0f0;"></div>
<div class="a" style="left:249px;top:985px;width:1357px;height:1px;background:#000;"></div>
<div class="a" style="left:344px;top:986px;width:84px;height:19px;background:#fff;border:1px solid #000;border-top:none;box-sizing:border-box;"></div>
<div class="t" style="left:262px;top:988px;--w:68;font-size:12.5px;color:#666;">EURUSD,M30</div>
<div class="t" style="left:356px;top:988px;--w:60;font-size:12.5px;color:#000;">GBPUSD,H1</div>
<div class="t" style="left:439px;top:988px;--w:62;font-size:12.5px;color:#666;">USDCHF,H1</div>
<svg class="a" style="left:1566px;top:991px;" width="6" height="9" viewBox="0 0 6 9"><path d="M5 0.5V8.5L0.5 4.5Z" fill="#aaa"/></svg>
<svg class="a" style="left:1588px;top:991px;" width="6" height="9" viewBox="0 0 6 9"><path d="M1 0.5V8.5L5.5 4.5Z" fill="#aaa"/></svg>
<div class="a" style="left:0px;top:1005px;width:1608px;height:157px;background:#f0f0f0;"></div>
<div class="a" style="left:0px;top:1007px;width:1608px;height:1px;background:#a0a0a0;"></div>
<svg class="a" style="left:5px;top:1011px;" width="8" height="8" viewBox="0 0 8 8"><path d="M1 1L7 7M7 1L1 7" stroke="#000" stroke-width="1.7"/></svg>
<div class="a" style="left:2px;top:1023px;width:13px;height:135px;background:linear-gradient(90deg,#c6d3e3,#dae5f3);"></div>
<svg class="a" style="left:2px;top:1023px;" width="13" height="136" viewBox="0 0 13 136"><text x="0" y="0" transform="translate(11,133) rotate(-90)" font-size="11.5" textLength="51" lengthAdjust="spacingAndGlyphs" fill="#000" font-family="Liberation Sans">ツールボックス</text></svg>
<div class="a" style="left:16px;top:1009px;width:1588px;height:128px;background:#fff;border-left:1px solid #a0a0a0;border-top:1px solid #a0a0a0;box-sizing:border-box;"></div>
<div class="t" style="left:23px;top:1013px;--w:26.5;font-size:12.5px;">銘柄</div>
<svg class="a" style="left:66px;top:1019px;" width="8" height="5" viewBox="0 0 8 5"><path d="M0 5H8L4 0Z" fill="#222"/></svg>
<div class="a" style="left:206px;top:1010px;width:1px;height:23px;background:#e5e5e5;"></div>
<div class="t" style="left:212.5px;top:1013px;--w:37.5;font-size:12.5px;">チケット</div>
<div class="a" style="left:338px;top:1010px;width:1px;height:23px;background:#e5e5e5;"></div>
<div class="t" style="left:446.5px;top:1013px;--w:26;font-size:12.5px;">時間</div>
<div class="a" style="left:477px;top:1010px;width:1px;height:23px;background:#e5e5e5;"></div>
<div class="t" style="left:590px;top:1013px;--w:28.5;font-size:12.5px;">タイプ</div>
<div class="a" style="left:623px;top:1010px;width:1px;height:23px;background:#e5e5e5;"></div>
<div class="t" style="left:739px;top:1013px;--w:26;font-size:12.5px;">数量</div>
<div class="a" style="left:770px;top:1010px;width:1px;height:23px;background:#e5e5e5;"></div>
<div class="t" style="left:885px;top:1013px;--w:26.5;font-size:12.5px;">価格</div>
<div class="a" style="left:916px;top:1010px;width:1px;height:23px;background:#e5e5e5;"></div>
<div class="t" style="left:966.5px;top:1013px;--w:90;font-size:12.5px;">決済逆指値(S/L)</div>
<div class="a" style="left:1062px;top:1010px;width:1px;height:23px;background:#e5e5e5;"></div>
<div class="t" style="left:1124px;top:1013px;--w:78.5;font-size:12.5px;">決済指値(T/P)</div>
<div class="a" style="left:1208px;top:1010px;width:1px;height:23px;background:#e5e5e5;"></div>
<div class="t" style="left:1322.5px;top:1013px;--w:26.5;font-size:12.5px;">価格</div>
<div class="a" style="left:1354px;top:1010px;width:1px;height:23px;background:#e5e5e5;"></div>
<div class="t" style="left:1571.5px;top:1013px;--w:25;font-size:12.5px;">損益</div>
<div class="a" style="left:17px;top:1034px;width:1586px;height:19px;background:#c8c8c8;"></div>
<div class="t" style="left:23px;top:1035px;font-size:10px;line-height:16px;">•</div>
<div class="t" style="left:37.5px;top:1036px;--w:412.5;font-size:12.5px;font-weight:bold;">残高: 100 000.00 <span style="font-weight:normal;color:#333">JPY</span>&nbsp; 有効証拠金: 100 000.00&nbsp; 余剰証拠金: 100 000.00</div>
<div class="t" style="left:1574px;top:1036px;--w:25;font-size:12.5px;font-weight:bold;">0.00</div>
<div class="a" style="left:16px;top:1137px;width:1592px;height:1px;background:#000;"></div>
<div class="a" style="left:19px;top:1137px;width:46px;height:21px;background:#fff;border:1px solid #000;border-top:none;box-sizing:border-box;"></div>
<div class="t" style="left:29px;top:1139px;--w:25;font-size:12.5px;line-height:16px;color:#000;">取引</div>
<div class="t" style="left:75px;top:1139px;--w:52.5;font-size:12.5px;line-height:16px;color:#777;">運用比率</div>
<div class="t" style="left:147.5px;top:1139px;--w:51.5;font-size:12.5px;line-height:16px;color:#777;">口座履歴</div>
<div class="t" style="left:218.5px;top:1139px;--w:52.5;font-size:12.5px;line-height:16px;color:#777;">ニュース<span style="color:#e02020;font-size:9px;font-weight:bold;position:relative;top:4px">99</span></div>
<div class="t" style="left:291px;top:1139px;--w:60.5;font-size:12.5px;line-height:16px;color:#777;">受信トレイ<span style="color:#e02020;font-size:9px;font-weight:bold;position:relative;top:4px">7</span></div>
<div class="t" style="left:372.5px;top:1139px;--w:74;font-size:12.5px;line-height:16px;color:#777;">指標カレンダー</div>
<div class="t" style="left:467.5px;top:1139px;--w:25;font-size:12.5px;line-height:16px;color:#777;">会社</div>
<div class="t" style="left:512.5px;top:1139px;--w:40;font-size:12.5px;line-height:16px;color:#777;">アラート</div>
<div class="t" style="left:572.5px;top:1139px;--w:32.5;font-size:12.5px;line-height:16px;color:#777;">記事<span style="color:#e02020;font-size:9px;font-weight:bold;position:relative;top:4px">3</span></div>
<div class="t" style="left:625px;top:1139px;--w:45;font-size:12.5px;line-height:16px;color:#777;">ライブラリ</div>
<div class="t" style="left:690px;top:1139px;--w:62.5;font-size:12.5px;line-height:16px;color:#777;">エキスパート</div>
<div class="t" style="left:772px;top:1139px;--w:45;font-size:12.5px;line-height:16px;color:#777;">操作ログ</div>
<div class="a" style="left:137px;top:1143px;width:1px;height:13px;background:#888;"></div>
<div class="a" style="left:209px;top:1143px;width:1px;height:13px;background:#888;"></div>
<div class="a" style="left:281px;top:1143px;width:1px;height:13px;background:#888;"></div>
<div class="a" style="left:362px;top:1143px;width:1px;height:13px;background:#888;"></div>
<div class="a" style="left:457px;top:1143px;width:1px;height:13px;background:#888;"></div>
<div class="a" style="left:502px;top:1143px;width:1px;height:13px;background:#888;"></div>
<div class="a" style="left:562px;top:1143px;width:1px;height:13px;background:#888;"></div>
<div class="a" style="left:615px;top:1143px;width:1px;height:13px;background:#888;"></div>
<div class="a" style="left:680px;top:1143px;width:1px;height:13px;background:#888;"></div>
<div class="a" style="left:762px;top:1143px;width:1px;height:13px;background:#888;"></div>
<svg class="a" style="left:1424px;top:1143px;" width="13" height="14" viewBox="0 0 13 14"><path d="M1 5H12L12.5 13.5H0.5Z" fill="#f4c20d" stroke="#d9a300"/><path d="M4 6V3Q6.5 0 9 3V6" stroke="#c89000" fill="none"/></svg>
<div class="t" style="left:1441.5px;top:1141px;--w:25;font-size:12.5px;">市場</div>
<div class="t" style="left:1480px;top:1141px;--w:61.5;font-size:12.5px;color:#aaa;"><span style="font-size:9px;color:#aaa">((•))</span> シグナル</div>
<svg class="a" style="left:1554px;top:1144px;" width="16" height="13" viewBox="0 0 16 13"><path d="M3.5 8Q0.5 8 1 5.5Q1.5 3.5 4 4Q5 0.8 8.5 0.8Q12 0.8 12.5 4Q15 4 15 6Q15 8 12.5 8Z" fill="#c4e2fb" stroke="#1866ac" stroke-width="1.1"/><path d="M8 8V11.5M2.5 11.5H13.5" stroke="#1866ac" stroke-width="1.1"/></svg>
<div class="t" style="left:1573px;top:1141px;--w:21;font-size:12.5px;">VPS</div>
<div class="a" style="left:0px;top:1161px;width:1608px;height:1px;background:#a0a0a0;"></div>
<div class="a" style="left:0px;top:1165px;width:1608px;height:1px;background:#a0a0a0;"></div>
<svg class="a" style="left:5px;top:1169px;" width="8" height="8" viewBox="0 0 8 8"><path d="M1 1L7 7M7 1L1 7" stroke="#000" stroke-width="1.7"/></svg>
<div class="a" style="left:2px;top:1181px;width:13px;height:174px;background:linear-gradient(90deg,#c6d3e3,#dae5f3);"></div>
<svg class="a" style="left:2px;top:1181px;" width="13" height="174" viewBox="0 0 13 174"><text x="0" y="0" transform="translate(11,171) rotate(-90)" font-size="11.5" textLength="96" lengthAdjust="spacingAndGlyphs" fill="#000" font-family="Liberation Sans">ストラテジーテスター</text></svg>
<div class="a" style="left:16px;top:1167px;width:1588px;height:169px;background:#fff;border-left:1px solid #a0a0a0;border-top:1px solid #a0a0a0;box-sizing:border-box;"></div>
<div class="a" style="left:33px;top:1185px;width:100px;height:100px;border:1px solid #e6e6e6;box-sizing:border-box;"></div>
<div class="t" style="left:68.5px;top:1293px;--w:29;font-size:13px;line-height:16px;">単一</div>
<div class="a" style="left:149px;top:1185px;width:100px;height:100px;border:1px solid #e6e6e6;box-sizing:border-box;"></div>
<div class="t" style="left:159.2px;top:1293px;--w:77.6;font-size:13px;line-height:16px;">インディケータ</div>
<div class="a" style="left:265px;top:1185px;width:100px;height:100px;border:1px solid #e6e6e6;box-sizing:border-box;"></div>
<div class="t" style="left:292.5px;top:1293px;--w:43.8;font-size:13px;line-height:16px;">可視化</div>
<div class="a" style="left:381px;top:1185px;width:100px;height:100px;border:1px solid #e6e6e6;box-sizing:border-box;"></div>
<div class="t" style="left:388px;top:1293px;--w:83.6;font-size:13px;line-height:16px;">ストレスと延滞</div>
<div class="a" style="left:513px;top:1185px;width:100px;height:100px;border:1px solid #e6e6e6;box-sizing:border-box;"></div>
<div class="t" style="left:520.2px;top:1293px;--w:82.8;font-size:13px;line-height:16px;">最適化を完了</div>
<div class="a" style="left:629px;top:1185px;width:100px;height:100px;border:1px solid #e6e6e6;box-sizing:border-box;"></div>
<div class="t" style="left:635px;top:1293px;--w:88.4;font-size:13px;line-height:16px;">遺伝的最適化</div>
<div class="a" style="left:745px;top:1185px;width:100px;height:100px;border:1px solid #e6e6e6;box-sizing:border-box;"></div>
<div class="t" style="left:744.1px;top:1293px;--w:98.7;font-size:13px;line-height:16px;">フォワード最適化</div>
<div class="a" style="left:877px;top:1185px;width:100px;height:100px;border:1px solid #e6e6e6;box-sizing:border-box;"></div>
<div class="t" style="left:891.3px;top:1293px;--w:70.9;font-size:13px;line-height:16px;">市場スキャン</div>
<div class="a" style="left:993px;top:1185px;width:100px;height:100px;border:1px solid #e6e6e6;box-sizing:border-box;"></div>
<div class="t" style="left:1013.9px;top:1293px;--w:57.7;font-size:13px;line-height:16px;">数値計算</div>
<div class="a" style="left:1125px;top:1185px;width:100px;height:100px;border:1px solid #e6e6e6;box-sizing:border-box;"></div>
<div class="t" style="left:1132px;top:1294px;--w:84.8;font-size:13px;line-height:16px;">前の最適化結</div>
<div class="t" style="left:1147.3px;top:1310px;--w:55.7;font-size:13px;line-height:16px;">果を確認</div>
<svg class="a" style="left:33px;top:1185px" width="100" height="100" viewBox="0 0 100 100"><rect x="14.5" y="14.5" width="40" height="36" fill="#fff" stroke="#c8c8c8"/><path d="M14.5 17.5H54.5" stroke="#ddd"/><path d="M18 44V48" stroke="#1e5ee8" stroke-width="1"/><path d="M20 41V48" stroke="#f05a4a" stroke-width="1"/><path d="M23 36V48" stroke="#1e5ee8" stroke-width="1"/><path d="M26 31V48" stroke="#f05a4a" stroke-width="1"/><path d="M29 23V48" stroke="#1e5ee8" stroke-width="1"/><path d="M31 21V48" stroke="#f05a4a" stroke-width="1"/><path d="M34 25V48" stroke="#1e5ee8" stroke-width="1"/><path d="M37 29V48" stroke="#f05a4a" stroke-width="1"/><path d="M40 33V48" stroke="#1e5ee8" stroke-width="1"/><path d="M43 39V48" stroke="#f05a4a" stroke-width="1"/><path d="M46 41V48" stroke="#1e5ee8" stroke-width="1"/><path d="M14.0 66.0 L15.2 66.5 L16.4 66.7 L17.6 66.2 L18.7 64.9 L19.9 63.0 L21.1 60.7 L22.3 58.4 L23.5 56.5 L24.6 55.2 L25.8 54.7 L27.0 54.9 L28.2 55.4 L29.4 55.9 L30.6 56.1 L31.8 55.5 L32.9 54.3 L34.1 52.4 L35.3 50.1 L36.5 47.8 L37.7 45.9 L38.8 44.7 L40.0 44.1 L41.2 44.3 L42.4 44.8 L43.6 45.3 L44.8 45.5 L46.0 44.9 L47.1 43.7 L48.3 41.8 L49.5 39.5 L50.7 37.2 L51.9 35.3 L53.1 34.0 L54.2 33.5 L55.4 33.7 L56.6 34.2 L57.8 34.7 L59.0 34.9 L60.1 34.3 L61.3 33.1 L62.5 31.2 L63.7 28.9 L64.9 26.6 L66.1 24.7 L67.2 23.4 L68.4 22.9 L69.6 23.1 L70.8 23.6 L72.0 24.1 L73.2 24.3 L74.3 23.8 L75.5 22.5 L76.7 20.6 L77.9 18.3 L79.1 16.0 L80.3 14.1 L81.5 12.9 L82.6 12.3 L83.8 12.5 L85.0 13.0" stroke="#1e5ee8" stroke-width="2.6" fill="none" stroke-linejoin="round"/><path d="M14.0 61.0 L15.2 61.5 L16.4 61.7 L17.6 61.1 L18.7 59.9 L19.9 58.0 L21.1 55.7 L22.3 53.4 L23.5 51.5 L24.6 50.2 L25.8 49.7 L27.0 49.9 L28.2 50.4 L29.4 50.9 L30.6 51.1 L31.8 50.5 L32.9 49.3 L34.1 47.4 L35.3 45.1 L36.5 42.8 L37.7 40.9 L38.8 39.7 L40.0 39.1 L41.2 39.3 L42.4 39.8 L43.6 40.3 L44.8 40.5 L46.0 39.9 L47.1 38.7 L48.3 36.8 L49.5 34.5 L50.7 32.2 L51.9 30.3 L53.1 29.0 L54.2 28.5 L55.4 28.7 L56.6 29.2 L57.8 29.7 L59.0 29.9 L60.1 29.3 L61.3 28.1 L62.5 26.2 L63.7 23.9 L64.9 21.6 L66.1 19.7 L67.2 18.4 L68.4 17.9 L69.6 18.1 L70.8 18.6 L72.0 19.1 L73.2 19.3 L74.3 18.8 L75.5 17.5 L76.7 15.6 L77.9 13.3 L79.1 11.0 L80.3 9.1 L81.5 7.9 L82.6 7.3 L83.8 7.5 L85.0 8.0" stroke="#18a818" stroke-width="2.6" fill="none" stroke-linejoin="round"/><rect x="39.5" y="65.5" width="46" height="20" fill="#fff" stroke="#c8c8c8"/><path d="M39.5 68H85.5" stroke="#ddd"/><path d="M43.0 72V83" stroke="#18a818" stroke-width="1.3"/><path d="M47.8 72V83" stroke="#18a818" stroke-width="1.3"/><path d="M52.6 72V83" stroke="#18a818" stroke-width="1.3"/><path d="M57.4 72V83" stroke="#18a818" stroke-width="1.3"/><path d="M62.2 72V83" stroke="#18a818" stroke-width="1.3"/><path d="M67.0 72V83" stroke="#18a818" stroke-width="1.3"/><path d="M71.8 72V83" stroke="#18a818" stroke-width="1.3"/><path d="M76.6 72V83" stroke="#18a818" stroke-width="1.3"/><path d="M81.4 72V83" stroke="#18a818" stroke-width="1.3"/></svg>
<svg class="a" style="left:149px;top:1185px" width="100" height="100" viewBox="0 0 100 100"><path d="M18 36V62" stroke="#444" stroke-width="1.1"/><rect x="16" y="42" width="4" height="14" fill="#fff" stroke="#444" stroke-width="1.1"/><path d="M26.5 47V69" stroke="#444" stroke-width="1.1"/><rect x="24.5" y="53" width="4" height="10" fill="#fff" stroke="#444" stroke-width="1.1"/><path d="M35 52V72" stroke="#444" stroke-width="1.1"/><rect x="33" y="58" width="4" height="8" fill="#444" stroke="#444" stroke-width="1.1"/><path d="M43.5 47V69" stroke="#444" stroke-width="1.1"/><rect x="41.5" y="53" width="4" height="10" fill="#fff" stroke="#444" stroke-width="1.1"/><path d="M52 25V46" stroke="#444" stroke-width="1.1"/><rect x="50" y="31" width="4" height="9" fill="#fff" stroke="#444" stroke-width="1.1"/><path d="M61 32V53" stroke="#444" stroke-width="1.1"/><rect x="59" y="38" width="4" height="9" fill="#444" stroke="#444" stroke-width="1.1"/><path d="M69.5 16V39" stroke="#444" stroke-width="1.1"/><rect x="67.5" y="22" width="4" height="11" fill="#fff" stroke="#444" stroke-width="1.1"/><path d="M78 15V38" stroke="#444" stroke-width="1.1"/><rect x="76" y="21" width="4" height="11" fill="#fff" stroke="#444" stroke-width="1.1"/><path d="M14.0 60.0 L15.2 60.6 L16.4 61.0 L17.6 60.7 L18.7 59.8 L19.9 58.2 L21.1 56.4 L22.3 54.5 L23.5 53.0 L24.6 52.1 L25.8 51.8 L27.0 52.1 L28.2 52.8 L29.4 53.5 L30.6 53.8 L31.8 53.5 L32.9 52.6 L34.1 51.0 L35.3 49.2 L36.5 47.4 L37.7 45.8 L38.8 44.9 L40.0 44.6 L41.2 45.0 L42.4 45.6 L43.6 46.2 L44.8 46.6 L46.0 46.3 L47.1 45.4 L48.3 43.9 L49.5 42.0 L50.7 40.1 L51.9 38.6 L53.1 37.7 L54.2 37.4 L55.4 37.8 L56.6 38.4 L57.8 39.0 L59.0 39.4 L60.1 39.1 L61.3 38.2 L62.5 36.6 L63.7 34.8 L64.9 33.0 L66.1 31.4 L67.2 30.5 L68.4 30.2 L69.6 30.6 L70.8 31.2 L72.0 31.8 L73.2 32.2 L74.3 31.9 L75.5 31.0 L76.7 29.5 L77.9 27.6 L79.1 25.8 L80.3 24.2 L81.5 23.3 L82.6 23.0 L83.8 23.3 L85.0 24.0" stroke="#18a818" stroke-width="2.4" fill="none" stroke-linejoin="round"/><path d="M14.5 83.0V85" stroke="#111" stroke-width="1"/><path d="M17.0 79.4V85" stroke="#111" stroke-width="1"/><path d="M19.5 78.9V85" stroke="#111" stroke-width="1"/><path d="M22.0 81.3V85" stroke="#111" stroke-width="1"/><path d="M24.5 77.7V85" stroke="#111" stroke-width="1"/><path d="M27.0 77.1V85" stroke="#111" stroke-width="1"/><path d="M29.5 79.6V85" stroke="#111" stroke-width="1"/><path d="M32.0 76.0V85" stroke="#111" stroke-width="1"/><path d="M34.5 75.4V85" stroke="#111" stroke-width="1"/><path d="M37.0 77.9V85" stroke="#111" stroke-width="1"/><path d="M39.5 74.3V85" stroke="#111" stroke-width="1"/><path d="M42.0 73.7V85" stroke="#111" stroke-width="1"/><path d="M44.5 76.1V85" stroke="#111" stroke-width="1"/><path d="M47.0 72.6V85" stroke="#111" stroke-width="1"/><path d="M49.5 72.0V85" stroke="#111" stroke-width="1"/><path d="M52.0 74.4V85" stroke="#111" stroke-width="1"/><path d="M54.5 70.9V85" stroke="#111" stroke-width="1"/><path d="M57.0 70.3V85" stroke="#111" stroke-width="1"/><path d="M59.5 72.7V85" stroke="#111" stroke-width="1"/><path d="M62.0 69.1V85" stroke="#111" stroke-width="1"/><path d="M64.5 68.6V85" stroke="#111" stroke-width="1"/><path d="M67.0 66.0V85" stroke="#111" stroke-width="1"/><path d="M69.5 62.4V85" stroke="#111" stroke-width="1"/><path d="M72.0 61.9V85" stroke="#111" stroke-width="1"/><path d="M74.5 64.3V85" stroke="#111" stroke-width="1"/><path d="M77.0 60.7V85" stroke="#111" stroke-width="1"/><path d="M79.5 60.1V85" stroke="#111" stroke-width="1"/><path d="M82.0 62.6V85" stroke="#111" stroke-width="1"/><path d="M84.5 59.0V85" stroke="#111" stroke-width="1"/><path d="M14 79Q30 83 45 77Q60 72 85 64" stroke="#18a818" stroke-width="1.2" stroke-dasharray="3 2" fill="none"/></svg>
<svg class="a" style="left:265px;top:1185px" width="100" height="100" viewBox="0 0 100 100"><path d="M18 40V66" stroke="#444" stroke-width="1.1"/><rect x="15.7" y="46" width="4.6" height="13" fill="#fff" stroke="#3a3f48" stroke-width="1.1"/><path d="M27 49V69" stroke="#444" stroke-width="1.1"/><rect x="24.7" y="55" width="4.6" height="8" fill="#3a3f48" stroke="#3a3f48" stroke-width="1.1"/><path d="M36 46V72" stroke="#444" stroke-width="1.1"/><rect x="33.7" y="52" width="4.6" height="14" fill="#3a3f48" stroke="#3a3f48" stroke-width="1.1"/><path d="M45 44V68" stroke="#444" stroke-width="1.1"/><rect x="42.7" y="48" width="4.6" height="12" fill="#fff" stroke="#3a3f48" stroke-width="1.1"/><path d="M54 31V55" stroke="#444" stroke-width="1.1"/><rect x="51.7" y="36" width="4.6" height="13" fill="#fff" stroke="#3a3f48" stroke-width="1.1"/><path d="M63 31V52" stroke="#444" stroke-width="1.1"/><rect x="60.7" y="38" width="4.6" height="8" fill="#3a3f48" stroke="#3a3f48" stroke-width="1.1"/><path d="M72 20V45" stroke="#444" stroke-width="1.1"/><rect x="69.7" y="24" width="4.6" height="18" fill="#fff" stroke="#3a3f48" stroke-width="1.1"/><path d="M81 17V44" stroke="#444" stroke-width="1.1"/><rect x="78.7" y="21" width="4.6" height="17" fill="#fff" stroke="#3a3f48" stroke-width="1.1"/><path d="M42 22H48V28H51.5L45 35L38.5 28H42Z" fill="#f05a4a"/><path d="M24 86H30V80H33.5L27 72L20.5 80H24Z" fill="#0a50d8"/><path d="M69.5 64H75.5V58H79L72.5 50L66 58H69.5Z" fill="#0a50d8"/></svg>
<svg class="a" style="left:381px;top:1185px" width="100" height="100" viewBox="0 0 100 100"><path d="M14.0 72.0 L15.2 72.3 L16.4 72.4 L17.6 71.8 L18.7 70.6 L19.9 68.8 L21.1 66.6 L22.3 64.5 L23.5 62.6 L24.6 61.4 L25.8 60.8 L27.0 60.9 L28.2 61.2 L29.4 61.5 L30.6 61.6 L31.8 61.0 L32.9 59.8 L34.1 58.0 L35.3 55.8 L36.5 53.7 L37.7 51.8 L38.8 50.6 L40.0 50.0 L41.2 50.0 L42.4 50.4 L43.6 50.8 L44.8 50.8 L46.0 50.2 L47.1 49.0 L48.3 47.2 L49.5 45.0 L50.7 42.8 L51.9 41.0 L53.1 39.8 L54.2 39.2 L55.4 39.2 L56.6 39.6 L57.8 39.9 L59.0 40.0 L60.1 39.4 L61.3 38.2 L62.5 36.4 L63.7 34.2 L64.9 32.0 L66.1 30.2 L67.2 29.0 L68.4 28.4 L69.6 28.5 L70.8 28.8 L72.0 29.1 L73.2 29.2 L74.3 28.6 L75.5 27.4 L76.7 25.6 L77.9 23.4 L79.1 21.3 L80.3 19.4 L81.5 18.2 L82.6 17.6 L83.8 17.6 L85.0 18.0" stroke="#1e5ee8" stroke-width="2.6" fill="none" stroke-linejoin="round"/><path d="M14.0 67.0 L15.2 67.3 L16.4 67.4 L17.6 66.8 L18.7 65.6 L19.9 63.8 L21.1 61.6 L22.3 59.5 L23.5 57.6 L24.6 56.4 L25.8 55.8 L27.0 55.9 L28.2 56.2 L29.4 56.5 L30.6 56.6 L31.8 56.0 L32.9 54.8 L34.1 53.0 L35.3 50.8 L36.5 48.7 L37.7 46.8 L38.8 45.6 L40.0 45.0 L41.2 45.0 L42.4 45.4 L43.6 45.8 L44.8 45.8 L46.0 45.2 L47.1 44.0 L48.3 42.2 L49.5 40.0 L50.7 37.8 L51.9 36.0 L53.1 34.8 L54.2 34.2 L55.4 34.2 L56.6 34.6 L57.8 34.9 L59.0 35.0 L60.1 34.4 L61.3 33.2 L62.5 31.4 L63.7 29.2 L64.9 27.1 L66.1 25.2 L67.2 24.0 L68.4 23.4 L69.6 23.5 L70.8 23.8 L72.0 24.1 L73.2 24.2 L74.3 23.6 L75.5 22.4 L76.7 20.6 L77.9 18.4 L79.1 16.3 L80.3 14.4 L81.5 13.2 L82.6 12.6 L83.8 12.6 L85.0 13.0" stroke="#18a818" stroke-width="2.6" fill="none" stroke-linejoin="round"/><circle cx="23.5" cy="41" r="7.5" fill="#fff" stroke="#666" stroke-width="2"/><path d="M21 31H26M23.5 31V33.5M29 34L31 32" stroke="#666" stroke-width="1.6"/><path d="M23.5 41L27 37" stroke="#f05a4a" stroke-width="1.3"/><path d="M22 53V63M26 53V63" stroke="#1e5ee8" stroke-width="1" stroke-dasharray="2 1.5"/><path d="M19 62L24 68L29 62" stroke="#1e5ee8" stroke-width="1" fill="none"/><circle cx="66.5" cy="72" r="7.5" fill="#fff" stroke="#666" stroke-width="2"/><path d="M64 62H69M66.5 62V64.5M72 65L74 63" stroke="#666" stroke-width="1.6"/><path d="M66.5 72L70 68" stroke="#f05a4a" stroke-width="1.3"/><path d="M53 70H60M55 74H60M57 78H61" stroke="#f05a4a" stroke-width="1.4"/><path d="M64 59V49M68 59V49" stroke="#f05a4a" stroke-width="1" stroke-dasharray="2 1.5"/><path d="M61 50L66 44L71 50" stroke="#f05a4a" stroke-width="1" fill="none"/></svg>
<svg class="a" style="left:513px;top:1185px" width="100" height="100" viewBox="0 0 100 100"><path d="M13.5 48.5H86" stroke="#444" stroke-width="1.1"/><circle cx="19" cy="26" r="1.3" fill="#1e5ee8"/><circle cx="36" cy="20" r="1.3" fill="#1e5ee8"/><circle cx="49" cy="27" r="1.3" fill="#1e5ee8"/><circle cx="62" cy="23" r="1.3" fill="#1e5ee8"/><circle cx="73" cy="28" r="1.3" fill="#1e5ee8"/><circle cx="81" cy="21" r="1.3" fill="#1e5ee8"/><circle cx="27" cy="31" r="1.3" fill="#1e5ee8"/><circle cx="39" cy="29" r="1.3" fill="#1e5ee8"/><circle cx="43" cy="36" r="1.3" fill="#1e5ee8"/><circle cx="55" cy="33" r="1.3" fill="#1e5ee8"/><circle cx="68" cy="32" r="1.3" fill="#1e5ee8"/><circle cx="20" cy="36" r="1.3" fill="#1e5ee8"/><circle cx="29" cy="40" r="1.3" fill="#1e5ee8"/><circle cx="36" cy="39" r="1.3" fill="#1e5ee8"/><circle cx="47" cy="40" r="1.3" fill="#1e5ee8"/><circle cx="52" cy="39" r="1.3" fill="#1e5ee8"/><circle cx="57" cy="37" r="1.3" fill="#1e5ee8"/><circle cx="60" cy="41" r="1.3" fill="#1e5ee8"/><circle cx="64" cy="39" r="1.3" fill="#1e5ee8"/><circle cx="71" cy="40" r="1.3" fill="#1e5ee8"/><circle cx="75" cy="38" r="1.3" fill="#1e5ee8"/><circle cx="79" cy="42" r="1.3" fill="#1e5ee8"/><circle cx="19" cy="44" r="1.3" fill="#1e5ee8"/><circle cx="27" cy="44" r="1.3" fill="#1e5ee8"/><circle cx="31" cy="45" r="1.3" fill="#1e5ee8"/><circle cx="35" cy="44" r="1.3" fill="#1e5ee8"/><circle cx="40" cy="45" r="1.3" fill="#1e5ee8"/><circle cx="44" cy="43" r="1.3" fill="#1e5ee8"/><circle cx="50" cy="45" r="1.3" fill="#1e5ee8"/><circle cx="54" cy="45" r="1.3" fill="#1e5ee8"/><circle cx="62" cy="44" r="1.3" fill="#1e5ee8"/><circle cx="66" cy="45" r="1.3" fill="#1e5ee8"/><circle cx="73" cy="44" r="1.3" fill="#1e5ee8"/><circle cx="19" cy="53" r="1.3" fill="#1e5ee8"/><circle cx="24" cy="53" r="1.3" fill="#1e5ee8"/><circle cx="29" cy="55" r="1.3" fill="#1e5ee8"/><circle cx="36" cy="52" r="1.3" fill="#1e5ee8"/><circle cx="42" cy="53" r="1.3" fill="#1e5ee8"/><circle cx="47" cy="55" r="1.3" fill="#1e5ee8"/><circle cx="53" cy="52" r="1.3" fill="#1e5ee8"/><circle cx="58" cy="53" r="1.3" fill="#1e5ee8"/><circle cx="63" cy="54" r="1.3" fill="#1e5ee8"/><circle cx="68" cy="52" r="1.3" fill="#1e5ee8"/><circle cx="72" cy="55" r="1.3" fill="#1e5ee8"/><circle cx="76" cy="53" r="1.3" fill="#1e5ee8"/><circle cx="81" cy="55" r="1.3" fill="#1e5ee8"/><circle cx="17" cy="60" r="1.3" fill="#1e5ee8"/><circle cx="27" cy="61" r="1.3" fill="#1e5ee8"/><circle cx="32" cy="59" r="1.3" fill="#1e5ee8"/><circle cx="37" cy="60" r="1.3" fill="#1e5ee8"/><circle cx="46" cy="57" r="1.3" fill="#1e5ee8"/><circle cx="55" cy="58" r="1.3" fill="#1e5ee8"/><circle cx="61" cy="59" r="1.3" fill="#1e5ee8"/><circle cx="67" cy="61" r="1.3" fill="#1e5ee8"/><circle cx="75" cy="58" r="1.3" fill="#1e5ee8"/><circle cx="23" cy="67" r="1.3" fill="#1e5ee8"/><circle cx="35" cy="66" r="1.3" fill="#1e5ee8"/><circle cx="47" cy="65" r="1.3" fill="#1e5ee8"/><circle cx="59" cy="63" r="1.3" fill="#1e5ee8"/><circle cx="63" cy="68" r="1.3" fill="#1e5ee8"/><circle cx="71" cy="67" r="1.3" fill="#1e5ee8"/><circle cx="41" cy="73" r="1.3" fill="#1e5ee8"/><circle cx="70" cy="79" r="1.3" fill="#1e5ee8"/><circle cx="76" cy="60" r="1.3" fill="#1e5ee8"/><circle cx="65" cy="48" r="1.3" fill="#1e5ee8"/><circle cx="50" cy="48" r="1.3" fill="#1e5ee8"/></svg>
<svg class="a" style="left:629px;top:1185px" width="100" height="100" viewBox="0 0 100 100"><rect x="13.5" y="13.5" width="72" height="72" fill="#eee"/><rect x="13.5" y="13.5" width="4" height="4" fill="#d8d8d8"/><rect x="13.5" y="21.5" width="4" height="4" fill="#d8d8d8"/><rect x="13.5" y="29.5" width="4" height="4" fill="#d8d8d8"/><rect x="13.5" y="37.5" width="4" height="4" fill="#d8d8d8"/><rect x="13.5" y="45.5" width="4" height="4" fill="#d8d8d8"/><rect x="13.5" y="53.5" width="4" height="4" fill="#d8d8d8"/><rect x="13.5" y="61.5" width="4" height="4" fill="#d8d8d8"/><rect x="13.5" y="69.5" width="4" height="4" fill="#d8d8d8"/><rect x="13.5" y="77.5" width="4" height="4" fill="#d8d8d8"/><rect x="17.5" y="17.5" width="4" height="4" fill="#d8d8d8"/><rect x="17.5" y="25.5" width="4" height="4" fill="#d8d8d8"/><rect x="17.5" y="33.5" width="4" height="4" fill="#d8d8d8"/><rect x="17.5" y="41.5" width="4" height="4" fill="#d8d8d8"/><rect x="17.5" y="49.5" width="4" height="4" fill="#d8d8d8"/><rect x="17.5" y="57.5" width="4" height="4" fill="#d8d8d8"/><rect x="17.5" y="65.5" width="4" height="4" fill="#d8d8d8"/><rect x="17.5" y="73.5" width="4" height="4" fill="#d8d8d8"/><rect x="17.5" y="81.5" width="4" height="4" fill="#d8d8d8"/><rect x="21.5" y="13.5" width="4" height="4" fill="#d8d8d8"/><rect x="21.5" y="21.5" width="4" height="4" fill="#d8d8d8"/><rect x="21.5" y="29.5" width="4" height="4" fill="#d8d8d8"/><rect x="21.5" y="37.5" width="4" height="4" fill="#d8d8d8"/><rect x="21.5" y="45.5" width="4" height="4" fill="#d8d8d8"/><rect x="21.5" y="53.5" width="4" height="4" fill="#d8d8d8"/><rect x="21.5" y="61.5" width="4" height="4" fill="#d8d8d8"/><rect x="21.5" y="69.5" width="4" height="4" fill="#d8d8d8"/><rect x="21.5" y="77.5" width="4" height="4" fill="#d8d8d8"/><rect x="25.5" y="17.5" width="4" height="4" fill="#d8d8d8"/><rect x="25.5" y="25.5" width="4" height="4" fill="#d8d8d8"/><rect x="25.5" y="33.5" width="4" height="4" fill="#d8d8d8"/><rect x="25.5" y="41.5" width="4" height="4" fill="#d8d8d8"/><rect x="25.5" y="49.5" width="4" height="4" fill="#d8d8d8"/><rect x="25.5" y="57.5" width="4" height="4" fill="#d8d8d8"/><rect x="25.5" y="65.5" width="4" height="4" fill="#d8d8d8"/><rect x="25.5" y="73.5" width="4" height="4" fill="#d8d8d8"/><rect x="25.5" y="81.5" width="4" height="4" fill="#d8d8d8"/><rect x="29.5" y="13.5" width="4" height="4" fill="#d8d8d8"/><rect x="29.5" y="21.5" width="4" height="4" fill="#d8d8d8"/><rect x="29.5" y="29.5" width="4" height="4" fill="#d8d8d8"/><rect x="29.5" y="37.5" width="4" height="4" fill="#d8d8d8"/><rect x="29.5" y="45.5" width="4" height="4" fill="#d8d8d8"/><rect x="29.5" y="53.5" width="4" height="4" fill="#d8d8d8"/><rect x="29.5" y="61.5" width="4" height="4" fill="#d8d8d8"/><rect x="29.5" y="69.5" width="4" height="4" fill="#d8d8d8"/><rect x="29.5" y="77.5" width="4" height="4" fill="#d8d8d8"/><rect x="33.5" y="17.5" width="4" height="4" fill="#d8d8d8"/><rect x="33.5" y="25.5" width="4" height="4" fill="#d8d8d8"/><rect x="33.5" y="33.5" width="4" height="4" fill="#d8d8d8"/><rect x="33.5" y="41.5" width="4" height="4" fill="#d8d8d8"/><rect x="33.5" y="49.5" width="4" height="4" fill="#d8d8d8"/><rect x="33.5" y="57.5" width="4" height="4" fill="#d8d8d8"/><rect x="33.5" y="65.5" width="4" height="4" fill="#d8d8d8"/><rect x="33.5" y="73.5" width="4" height="4" fill="#d8d8d8"/><rect x="33.5" y="81.5" width="4" height="4" fill="#d8d8d8"/><rect x="37.5" y="13.5" width="4" height="4" fill="#d8d8d8"/><rect x="37.5" y="21.5" width="4" height="4" fill="#d8d8d8"/><rect x="37.5" y="29.5" width="4" height="4" fill="#d8d8d8"/><rect x="37.5" y="37.5" width="4" height="4" fill="#d8d8d8"/><rect x="37.5" y="45.5" width="4" height="4" fill="#d8d8d8"/><rect x="37.5" y="53.5" width="4" height="4" fill="#d8d8d8"/><rect x="37.5" y="61.5" width="4" height="4" fill="#d8d8d8"/><rect x="37.5" y="69.5" width="4" height="4" fill="#d8d8d8"/><rect x="37.5" y="77.5" width="4" height="4" fill="#d8d8d8"/><rect x="41.5" y="17.5" width="4" height="4" fill="#d8d8d8"/><rect x="41.5" y="25.5" width="4" height="4" fill="#d8d8d8"/><rect x="41.5" y="33.5" width="4" height="4" fill="#d8d8d8"/><rect x="41.5" y="41.5" width="4" height="4" fill="#d8d8d8"/><rect x="41.5" y="49.5" width="4" height="4" fill="#d8d8d8"/><rect x="41.5" y="57.5" width="4" height="4" fill="#d8d8d8"/><rect x="41.5" y="65.5" width="4" height="4" fill="#d8d8d8"/><rect x="41.5" y="73.5" width="4" height="4" fill="#d8d8d8"/><rect x="41.5" y="81.5" width="4" height="4" fill="#d8d8d8"/><rect x="45.5" y="13.5" width="4" height="4" fill="#d8d8d8"/><rect x="45.5" y="21.5" width="4" height="4" fill="#d8d8d8"/><rect x="45.5" y="29.5" width="4" height="4" fill="#d8d8d8"/><rect x="45.5" y="37.5" width="4" height="4" fill="#d8d8d8"/><rect x="45.5" y="45.5" width="4" height="4" fill="#d8d8d8"/><rect x="45.5" y="53.5" width="4" height="4" fill="#d8d8d8"/><rect x="45.5" y="61.5" width="4" height="4" fill="#d8d8d8"/><rect x="45.5" y="69.5" width="4" height="4" fill="#d8d8d8"/><rect x="45.5" y="77.5" width="4" height="4" fill="#d8d8d8"/><rect x="49.5" y="17.5" width="4" height="4" fill="#d8d8d8"/><rect x="49.5" y="25.5" width="4" height="4" fill="#d8d8d8"/><rect x="49.5" y="33.5" width="4" height="4" fill="#d8d8d8"/><rect x="49.5" y="41.5" width="4" height="4" fill="#d8d8d8"/><rect x="49.5" y="49.5" width="4" height="4" fill="#d8d8d8"/><rect x="49.5" y="57.5" width="4" height="4" fill="#d8d8d8"/><rect x="49.5" y="65.5" width="4" height="4" fill="#d8d8d8"/><rect x="49.5" y="73.5" width="4" height="4" fill="#d8d8d8"/><rect x="49.5" y="81.5" width="4" height="4" fill="#d8d8d8"/><rect x="53.5" y="13.5" width="4" height="4" fill="#d8d8d8"/><rect x="53.5" y="21.5" width="4" height="4" fill="#d8d8d8"/><rect x="53.5" y="29.5" width="4" height="4" fill="#d8d8d8"/><rect x="53.5" y="37.5" width="4" height="4" fill="#d8d8d8"/><rect x="53.5" y="45.5" width="4" height="4" fill="#d8d8d8"/><rect x="53.5" y="53.5" width="4" height="4" fill="#d8d8d8"/><rect x="53.5" y="61.5" width="4" height="4" fill="#d8d8d8"/><rect x="53.5" y="69.5" width="4" height="4" fill="#d8d8d8"/><rect x="53.5" y="77.5" width="4" height="4" fill="#d8d8d8"/><rect x="57.5" y="17.5" width="4" height="4" fill="#d8d8d8"/><rect x="57.5" y="25.5" width="4" height="4" fill="#d8d8d8"/><rect x="57.5" y="33.5" width="4" height="4" fill="#d8d8d8"/><rect x="57.5" y="41.5" width="4" height="4" fill="#d8d8d8"/><rect x="57.5" y="49.5" width="4" height="4" fill="#d8d8d8"/><rect x="57.5" y="57.5" width="4" height="4" fill="#d8d8d8"/><rect x="57.5" y="65.5" width="4" height="4" fill="#d8d8d8"/><rect x="57.5" y="73.5" width="4" height="4" fill="#d8d8d8"/><rect x="57.5" y="81.5" width="4" height="4" fill="#d8d8d8"/><rect x="61.5" y="13.5" width="4" height="4" fill="#d8d8d8"/><rect x="61.5" y="21.5" width="4" height="4" fill="#d8d8d8"/><rect x="61.5" y="29.5" width="4" height="4" fill="#d8d8d8"/><rect x="61.5" y="37.5" width="4" height="4" fill="#d8d8d8"/><rect x="61.5" y="45.5" width="4" height="4" fill="#d8d8d8"/><rect x="61.5" y="53.5" width="4" height="4" fill="#d8d8d8"/><rect x="61.5" y="61.5" width="4" height="4" fill="#d8d8d8"/><rect x="61.5" y="69.5" width="4" height="4" fill="#d8d8d8"/><rect x="61.5" y="77.5" width="4" height="4" fill="#d8d8d8"/><rect x="65.5" y="17.5" width="4" height="4" fill="#d8d8d8"/><rect x="65.5" y="25.5" width="4" height="4" fill="#d8d8d8"/><rect x="65.5" y="33.5" width="4" height="4" fill="#d8d8d8"/><rect x="65.5" y="41.5" width="4" height="4" fill="#d8d8d8"/><rect x="65.5" y="49.5" width="4" height="4" fill="#d8d8d8"/><rect x="65.5" y="57.5" width="4" height="4" fill="#d8d8d8"/><rect x="65.5" y="65.5" width="4" height="4" fill="#d8d8d8"/><rect x="65.5" y="73.5" width="4" height="4" fill="#d8d8d8"/><rect x="65.5" y="81.5" width="4" height="4" fill="#d8d8d8"/><rect x="69.5" y="13.5" width="4" height="4" fill="#d8d8d8"/><rect x="69.5" y="21.5" width="4" height="4" fill="#d8d8d8"/><rect x="69.5" y="29.5" width="4" height="4" fill="#d8d8d8"/><rect x="69.5" y="37.5" width="4" height="4" fill="#d8d8d8"/><rect x="69.5" y="45.5" width="4" height="4" fill="#d8d8d8"/><rect x="69.5" y="53.5" width="4" height="4" fill="#d8d8d8"/><rect x="69.5" y="61.5" width="4" height="4" fill="#d8d8d8"/><rect x="69.5" y="69.5" width="4" height="4" fill="#d8d8d8"/><rect x="69.5" y="77.5" width="4" height="4" fill="#d8d8d8"/><rect x="73.5" y="17.5" width="4" height="4" fill="#d8d8d8"/><rect x="73.5" y="25.5" width="4" height="4" fill="#d8d8d8"/><rect x="73.5" y="33.5" width="4" height="4" fill="#d8d8d8"/><rect x="73.5" y="41.5" width="4" height="4" fill="#d8d8d8"/><rect x="73.5" y="49.5" width="4" height="4" fill="#d8d8d8"/><rect x="73.5" y="57.5" width="4" height="4" fill="#d8d8d8"/><rect x="73.5" y="65.5" width="4" height="4" fill="#d8d8d8"/><rect x="73.5" y="73.5" width="4" height="4" fill="#d8d8d8"/><rect x="73.5" y="81.5" width="4" height="4" fill="#d8d8d8"/><rect x="77.5" y="13.5" width="4" height="4" fill="#d8d8d8"/><rect x="77.5" y="21.5" width="4" height="4" fill="#d8d8d8"/><rect x="77.5" y="29.5" width="4" height="4" fill="#d8d8d8"/><rect x="77.5" y="37.5" width="4" height="4" fill="#d8d8d8"/><rect x="77.5" y="45.5" width="4" height="4" fill="#d8d8d8"/><rect x="77.5" y="53.5" width="4" height="4" fill="#d8d8d8"/><rect x="77.5" y="61.5" width="4" height="4" fill="#d8d8d8"/><rect x="77.5" y="69.5" width="4" height="4" fill="#d8d8d8"/><rect x="77.5" y="77.5" width="4" height="4" fill="#d8d8d8"/><rect x="81.5" y="17.5" width="4" height="4" fill="#d8d8d8"/><rect x="81.5" y="25.5" width="4" height="4" fill="#d8d8d8"/><rect x="81.5" y="33.5" width="4" height="4" fill="#d8d8d8"/><rect x="81.5" y="41.5" width="4" height="4" fill="#d8d8d8"/><rect x="81.5" y="49.5" width="4" height="4" fill="#d8d8d8"/><rect x="81.5" y="57.5" width="4" height="4" fill="#d8d8d8"/><rect x="81.5" y="65.5" width="4" height="4" fill="#d8d8d8"/><rect x="81.5" y="73.5" width="4" height="4" fill="#d8d8d8"/><rect x="81.5" y="81.5" width="4" height="4" fill="#d8d8d8"/><rect x="13.5" y="13.5" width="4" height="4" fill="#18a830"/><rect x="21.5" y="13.5" width="4" height="4" fill="#18a830"/><rect x="29.5" y="13.5" width="4" height="4" fill="#18a830"/><rect x="37.5" y="13.5" width="4" height="4" fill="#18a830"/><rect x="49.5" y="13.5" width="4" height="4" fill="#18a830"/><rect x="57.5" y="13.5" width="4" height="4" fill="#18a830"/><rect x="65.5" y="13.5" width="12" height="4" fill="#18a830"/><rect x="81.5" y="13.5" width="4" height="4" fill="#18a830"/><rect x="25.5" y="21.5" width="12" height="4" fill="#18a830"/><rect x="41.5" y="21.5" width="4" height="4" fill="#18a830"/><rect x="49.5" y="21.5" width="4" height="4" fill="#18a830"/><rect x="57.5" y="21.5" width="4" height="4" fill="#18a830"/><rect x="81.5" y="21.5" width="4" height="4" fill="#18a830"/><rect x="13.5" y="29.5" width="4" height="4" fill="#18a830"/><rect x="49.5" y="29.5" width="4" height="4" fill="#18a830"/><rect x="65.5" y="29.5" width="8" height="4" fill="#18a830"/><rect x="17.5" y="37.5" width="4" height="4" fill="#18a830"/><rect x="25.5" y="37.5" width="12" height="4" fill="#18a830"/><rect x="41.5" y="37.5" width="8" height="4" fill="#18a830"/><rect x="53.5" y="37.5" width="12" height="4" fill="#18a830"/><rect x="69.5" y="37.5" width="4" height="4" fill="#18a830"/><rect x="17.5" y="45.5" width="8" height="4" fill="#18a830"/><rect x="57.5" y="45.5" width="8" height="4" fill="#18a830"/><rect x="81.5" y="45.5" width="4" height="4" fill="#18a830"/><rect x="17.5" y="53.5" width="12" height="4" fill="#18a830"/><rect x="33.5" y="53.5" width="4" height="4" fill="#18a830"/><rect x="45.5" y="53.5" width="8" height="4" fill="#18a830"/><rect x="57.5" y="53.5" width="4" height="4" fill="#18a830"/><rect x="65.5" y="53.5" width="12" height="4" fill="#18a830"/><rect x="81.5" y="53.5" width="4" height="4" fill="#18a830"/><rect x="13.5" y="61.5" width="8" height="4" fill="#18a830"/><rect x="37.5" y="61.5" width="12" height="4" fill="#18a830"/><rect x="61.5" y="61.5" width="4" height="4" fill="#18a830"/><rect x="69.5" y="61.5" width="4" height="4" fill="#18a830"/><rect x="77.5" y="61.5" width="4" height="4" fill="#18a830"/><rect x="13.5" y="69.5" width="4" height="4" fill="#18a830"/><rect x="21.5" y="69.5" width="4" height="4" fill="#18a830"/><rect x="29.5" y="69.5" width="8" height="4" fill="#18a830"/><rect x="45.5" y="69.5" width="4" height="4" fill="#18a830"/><rect x="69.5" y="69.5" width="12" height="4" fill="#18a830"/><rect x="13.5" y="77.5" width="12" height="4" fill="#18a830"/><rect x="29.5" y="77.5" width="12" height="4" fill="#18a830"/><rect x="45.5" y="77.5" width="4" height="4" fill="#18a830"/><rect x="57.5" y="77.5" width="4" height="4" fill="#18a830"/><rect x="65.5" y="77.5" width="4" height="4" fill="#18a830"/><rect x="73.5" y="77.5" width="4" height="4" fill="#18a830"/><rect x="57.5" y="17.5" width="4" height="4" fill="#18a830"/><rect x="21.5" y="41.5" width="4" height="4" fill="#18a830"/><rect x="61.5" y="33.5" width="4" height="4" fill="#18a830"/><rect x="45.5" y="57.5" width="4" height="4" fill="#18a830"/><rect x="57.5" y="73.5" width="4" height="4" fill="#18a830"/><rect x="25.5" y="25.5" width="4" height="4" fill="#18a830"/><rect x="73.5" y="73.5" width="4" height="4" fill="#18a830"/><rect x="73.5" y="73.5" width="4" height="4" fill="#18a830"/></svg>
<svg class="a" style="left:745px;top:1185px" width="100" height="100" viewBox="0 0 100 100"><path d="M61.5 14V86" stroke="#333" stroke-width="1.2"/><rect x="20" y="21" width="13" height="13" fill="#fff" stroke="#bbb"/><path d="M22 26L26 31L35 21" stroke="#18a818" stroke-width="2" fill="none"/><rect x="64.5" y="21" width="13" height="13" fill="#fff" stroke="#bbb"/><path d="M66 26L69 30L76 22M70 28L72 30L80 21" stroke="#18a818" stroke-width="2" fill="none"/><path d="M14.0 78.0 L14.8 78.1 L15.5 78.1 L16.3 77.9 L17.1 77.6 L17.8 77.1 L18.6 76.4 L19.4 75.5 L20.1 74.4 L20.9 73.1 L21.7 71.8 L22.4 70.5 L23.2 69.3 L24.0 68.2 L24.7 67.3 L25.5 66.5 L26.3 66.0 L27.0 65.7 L27.8 65.6 L28.6 65.6 L29.3 65.7 L30.1 65.7 L30.9 65.7 L31.6 65.6 L32.4 65.3 L33.2 64.8 L33.9 64.1 L34.7 63.1 L35.5 62.0 L36.2 60.8 L37.0 59.5 L37.8 58.2 L38.5 57.0 L39.3 55.9 L40.1 54.9 L40.8 54.2 L41.6 53.7 L42.4 53.4 L43.1 53.3 L43.9 53.3 L44.7 53.3 L45.4 53.4 L46.2 53.4 L47.0 53.3 L47.7 53.0 L48.5 52.5 L49.3 51.7 L50.0 50.8 L50.8 49.7 L51.6 48.5 L52.3 47.2 L53.1 45.9 L53.9 44.6 L54.6 43.5 L55.4 42.6 L56.2 41.9 L56.9 41.4 L57.7 41.1 L58.5 40.9 L59.2 40.9 L60.0 41.0" stroke="#1e5ee8" stroke-width="2.6" fill="none" stroke-linejoin="round"/><path d="M14.0 74.0 L14.8 74.1 L15.5 74.1 L16.3 73.9 L17.1 73.6 L17.8 73.1 L18.6 72.4 L19.4 71.5 L20.1 70.4 L20.9 69.1 L21.7 67.8 L22.4 66.5 L23.2 65.3 L24.0 64.2 L24.7 63.3 L25.5 62.5 L26.3 62.0 L27.0 61.7 L27.8 61.6 L28.6 61.6 L29.3 61.7 L30.1 61.7 L30.9 61.7 L31.6 61.6 L32.4 61.3 L33.2 60.8 L33.9 60.1 L34.7 59.1 L35.5 58.0 L36.2 56.8 L37.0 55.5 L37.8 54.2 L38.5 53.0 L39.3 51.9 L40.1 50.9 L40.8 50.2 L41.6 49.7 L42.4 49.4 L43.1 49.3 L43.9 49.3 L44.7 49.3 L45.4 49.4 L46.2 49.4 L47.0 49.3 L47.7 49.0 L48.5 48.5 L49.3 47.7 L50.0 46.8 L50.8 45.7 L51.6 44.5 L52.3 43.2 L53.1 41.9 L53.9 40.6 L54.6 39.5 L55.4 38.6 L56.2 37.9 L56.9 37.4 L57.7 37.1 L58.5 36.9 L59.2 36.9 L60.0 37.0" stroke="#18a818" stroke-width="2.6" fill="none" stroke-linejoin="round"/><path d="M62.0 63.0 L62.4 63.0 L62.8 63.0 L63.2 62.9 L63.6 62.8 L64.0 62.7 L64.4 62.6 L64.8 62.4 L65.2 62.2 L65.6 62.0 L66.0 61.7 L66.4 61.3 L66.8 60.9 L67.2 60.4 L67.6 60.0 L68.0 59.4 L68.4 58.8 L68.8 58.2 L69.2 57.6 L69.6 57.0 L70.0 56.3 L70.4 55.7 L70.8 55.0 L71.2 54.4 L71.6 53.8 L72.0 53.3 L72.4 52.7 L72.8 52.2 L73.2 51.8 L73.6 51.4 L74.0 51.0 L74.4 50.7 L74.8 50.4 L75.2 50.2 L75.6 50.0 L76.0 49.9 L76.4 49.8 L76.8 49.8 L77.2 49.7 L77.6 49.7 L78.0 49.7 L78.4 49.6 L78.8 49.6 L79.2 49.6 L79.6 49.5 L80.0 49.4 L80.4 49.3 L80.8 49.1 L81.2 48.9 L81.6 48.6 L82.0 48.3 L82.4 48.0 L82.8 47.6 L83.2 47.1 L83.6 46.6 L84.0 46.1 L84.4 45.5 L84.8 44.9 L85.2 44.3 L85.6 43.6 L86.0 43.0" stroke="#1e5ee8" stroke-width="2.6" fill="none" stroke-linejoin="round"/><path d="M62.0 59.0 L62.4 59.0 L62.8 59.0 L63.2 58.9 L63.6 58.8 L64.0 58.7 L64.4 58.6 L64.8 58.4 L65.2 58.2 L65.6 58.0 L66.0 57.7 L66.4 57.3 L66.8 56.9 L67.2 56.4 L67.6 56.0 L68.0 55.4 L68.4 54.8 L68.8 54.2 L69.2 53.6 L69.6 53.0 L70.0 52.3 L70.4 51.7 L70.8 51.0 L71.2 50.4 L71.6 49.8 L72.0 49.3 L72.4 48.7 L72.8 48.2 L73.2 47.8 L73.6 47.4 L74.0 47.0 L74.4 46.7 L74.8 46.4 L75.2 46.2 L75.6 46.0 L76.0 45.9 L76.4 45.8 L76.8 45.8 L77.2 45.7 L77.6 45.7 L78.0 45.7 L78.4 45.6 L78.8 45.6 L79.2 45.6 L79.6 45.5 L80.0 45.4 L80.4 45.3 L80.8 45.1 L81.2 44.9 L81.6 44.6 L82.0 44.3 L82.4 44.0 L82.8 43.6 L83.2 43.1 L83.6 42.6 L84.0 42.1 L84.4 41.5 L84.8 40.9 L85.2 40.3 L85.6 39.6 L86.0 39.0" stroke="#18a818" stroke-width="2.6" fill="none" stroke-linejoin="round"/></svg>
<svg class="a" style="left:877px;top:1185px" width="100" height="100" viewBox="0 0 100 100"><rect x="14.5" y="14.5" width="71" height="71" fill="#fff" stroke="#aaa"/><path d="M14.5 18H85.5M18 40H82M18 62.5H82" stroke="#bbb"/><path d="M24 33H31L27.5 28Z" fill="#18a818"/><path d="M24 55H31L27.5 50Z" fill="#18a818"/><path d="M24 73H31L27.5 78Z" fill="#f05a4a"/><text x="48" y="36" text-anchor="middle" font-size="17" font-weight="bold" fill="#1e5ee8" font-family="Liberation Sans">$</text><text x="70" y="36" text-anchor="middle" font-size="17" font-weight="bold" fill="#1e5ee8" font-family="Liberation Sans">€</text><text x="48" y="58" text-anchor="middle" font-size="17" font-weight="bold" fill="#f05a4a" font-family="Liberation Sans">£</text><text x="70" y="58" text-anchor="middle" font-size="17" font-weight="bold" fill="#1e5ee8" font-family="Liberation Sans">¥</text><text x="48" y="81" text-anchor="middle" font-size="17" font-weight="bold" fill="#f05a4a" font-family="Liberation Sans">€</text><text x="70" y="81" text-anchor="middle" font-size="17" font-weight="bold" fill="#f05a4a" font-family="Liberation Sans">£</text></svg>
<svg class="a" style="left:993px;top:1185px" width="100" height="100" viewBox="0 0 100 100"><path d="M28 68V20M25.5 24L28 18L30.5 24" stroke="#aaa" stroke-width="1" fill="none"/><path d="M16 68Q26 66 30 50Q33 24.0 39 28.0Q44 26.0 47 42.0Q52 38.0 58 43.0Q64 30.0 68 42.0Q72 64 84 68" stroke="#2a5ee8" stroke-width="0.7" fill="none"/><path d="M16 68Q26 66 30 50Q33 28.0 39 31.4Q44 29.599999999999998 47 42.8Q52 39.4 58 45.0Q64 32.8 68 43.8Q72 64 84 68" stroke="#2a5ee8" stroke-width="0.7" fill="none"/><path d="M16 68Q26 66 30 50Q33 32.0 39 34.8Q44 33.199999999999996 47 43.6Q52 40.8 58 47.0Q64 35.6 68 45.6Q72 64 84 68" stroke="#2a5ee8" stroke-width="0.7" fill="none"/><path d="M16 68Q26 66 30 50Q33 36.0 39 38.2Q44 36.8 47 44.4Q52 42.2 58 49.0Q64 38.400000000000006 68 47.4Q72 64 84 68" stroke="#2a5ee8" stroke-width="0.7" fill="none"/><path d="M16 68Q26 66 30 50Q33 40.0 39 41.6Q44 40.4 47 45.2Q52 43.6 58 51.0Q64 41.2 68 49.2Q72 64 84 68" stroke="#2a5ee8" stroke-width="0.7" fill="none"/><path d="M16 68Q26 66 30 50Q33 44.0 39 45.0Q44 44.0 47 46.0Q52 45.0 58 53.0Q64 44.0 68 51.0Q72 64 84 68" stroke="#2a5ee8" stroke-width="0.7" fill="none"/><path d="M16 68Q26 66 30 50Q33 48.0 39 48.4Q44 47.599999999999994 47 46.8Q52 46.4 58 55.0Q64 46.8 68 52.8Q72 64 84 68" stroke="#8fa8e8" stroke-width="0.7" fill="none"/><path d="M16 68Q26 66 30 50Q33 52.0 39 51.8Q44 51.2 47 47.6Q52 47.8 58 57.0Q64 49.599999999999994 68 54.6Q72 64 84 68" stroke="#8fa8e8" stroke-width="0.7" fill="none"/><path d="M16 68Q26 66 30 50Q33 56.0 39 55.2Q44 54.8 47 48.4Q52 49.2 58 59.0Q64 52.400000000000006 68 56.4Q72 64 84 68" stroke="#8fa8e8" stroke-width="0.7" fill="none"/><path d="M16 68Q26 66 30 50Q33 60.0 39 58.6Q44 58.4 47 49.2Q52 50.6 58 61.0Q64 55.2 68 58.2Q72 64 84 68" stroke="#8fa8e8" stroke-width="0.7" fill="none"/><path d="M15 68H84L80 63H19Z" fill="none" stroke="#bbb" stroke-width="1"/><path d="M27 69Q50 71.0 73 69" stroke="#f06a5a" stroke-width="0.6" fill="none"/><path d="M27 69Q50 73.8 73 69" stroke="#f06a5a" stroke-width="0.6" fill="none"/><path d="M27 69Q50 76.6 73 69" stroke="#f06a5a" stroke-width="0.6" fill="none"/><path d="M27 69Q50 79.4 73 69" stroke="#f06a5a" stroke-width="0.6" fill="none"/><path d="M27 69Q50 82.2 73 69" stroke="#f06a5a" stroke-width="0.6" fill="none"/><path d="M27 69Q50 85.0 73 69" stroke="#f06a5a" stroke-width="0.6" fill="none"/><path d="M27 69Q50 87.8 73 69" stroke="#f06a5a" stroke-width="0.6" fill="none"/></svg>
<svg class="a" style="left:1125px;top:1185px" width="100" height="100" viewBox="0 0 100 100"><path d="M34 44Q37 30 48 30Q56 31 58 40" stroke="#1e5ee8" stroke-width="2" fill="none"/><path d="M28 42H40L34 49Z" fill="#1e5ee8"/><path d="M46.5 46H53L55 43.5H70.5V63.5H46.5Z" fill="#fff" stroke="#3a3f48" stroke-width="1"/><path d="M48.5 44V41.5H55L57 39.5H72.5V61.5" fill="none" stroke="#3a3f48" stroke-width="1"/><path d="M44.5 50H68.5L70.5 63.5H46.5Z" fill="#fff" stroke="#3a3f48" stroke-width="1"/></svg>
<div class="a" style="left:16px;top:1336px;width:1592px;height:1px;background:#000;"></div>
<div class="a" style="left:19px;top:1336px;width:46px;height:20px;background:#fff;border:1px solid #000;border-top:none;box-sizing:border-box;"></div>
<div class="t" style="left:28px;top:1337px;--w:27.8;font-size:12.5px;line-height:16px;color:#000;">概要</div>
<div class="t" style="left:73.6px;top:1337px;--w:27.9;font-size:12.5px;line-height:16px;color:#777;">設定</div>
<div class="t" style="left:119.4px;top:1337px;--w:50.9;font-size:12.5px;line-height:16px;color:#777;">パラメータ</div>
<div class="t" style="left:189px;top:1337px;--w:61;font-size:12.5px;line-height:16px;color:#777;">エージェント</div>
<div class="t" style="left:268.7px;top:1337px;--w:44.9;font-size:12.5px;line-height:16px;color:#777;">操作ログ</div>
<div class="a" style="left:111px;top:1341px;width:1px;height:13px;background:#888;"></div>
<div class="a" style="left:180px;top:1341px;width:1px;height:13px;background:#888;"></div>
<div class="a" style="left:259px;top:1341px;width:1px;height:13px;background:#888;"></div>
<svg class="a" style="left:1424px;top:1341px;" width="13" height="14" viewBox="0 0 13 14"><path d="M1 5H12L12.5 13.5H0.5Z" fill="#f4c20d" stroke="#d9a300"/><path d="M4 6V3Q6.5 0 9 3V6" stroke="#c89000" fill="none"/></svg>
<div class="t" style="left:1441.5px;top:1339px;--w:25;font-size:12.5px;">市場</div>
<div class="t" style="left:1480px;top:1339px;--w:61.5;font-size:12.5px;color:#aaa;"><span style="font-size:9px;color:#aaa">((•))</span> シグナル</div>
<svg class="a" style="left:1554px;top:1342px;" width="16" height="13" viewBox="0 0 16 13"><path d="M3.5 8Q0.5 8 1 5.5Q1.5 3.5 4 4Q5 0.8 8.5 0.8Q12 0.8 12.5 4Q15 4 15 6Q15 8 12.5 8Z" fill="#c4e2fb" stroke="#1866ac" stroke-width="1.1"/><path d="M8 8V11.5M2.5 11.5H13.5" stroke="#1866ac" stroke-width="1.1"/></svg>
<div class="t" style="left:1573px;top:1339px;--w:21;font-size:12.5px;">VPS</div>
<div class="a" style="left:0px;top:1359px;width:1608px;height:1px;background:#a0a0a0;"></div>
<div class="t" style="left:3px;top:1365px;--w:68;font-size:12.5px;">チャートを開く</div>
<div class="a" style="left:914px;top:1364px;width:1px;height:19px;background:#b0b0b0;"></div>
<div class="a" style="left:1042px;top:1364px;width:1px;height:19px;background:#b0b0b0;"></div>
<div class="a" style="left:1140px;top:1364px;width:1px;height:19px;background:#b0b0b0;"></div>
<div class="a" style="left:1211px;top:1364px;width:1px;height:19px;background:#b0b0b0;"></div>
<div class="a" style="left:1282px;top:1364px;width:1px;height:19px;background:#b0b0b0;"></div>
<div class="a" style="left:1350px;top:1364px;width:1px;height:19px;background:#b0b0b0;"></div>
<div class="a" style="left:1420px;top:1364px;width:1px;height:19px;background:#b0b0b0;"></div>
<div class="a" style="left:1486px;top:1364px;width:1px;height:19px;background:#b0b0b0;"></div>
<div class="t" style="left:920px;top:1365px;--w:24;font-size:12.5px;">Euro</div>
<svg class="a" style="left:1491px;top:1367px;" width="15" height="14" viewBox="0 0 15 14"><path d="M1.5 13V11M4.5 13V9M7.5 13V7M10.5 13V5M13.5 13V2" stroke="#18a818" stroke-width="1.8"/></svg>
<div class="t" style="left:1512px;top:1365px;--w:67;font-size:12.5px;">21.9 / 0.0 Mb</div>
<div class="a" style="left:0px;top:1383px;width:1608px;height:2px;background:#4a4a4a;"></div>
<div class="a" style="left:0px;top:31px;width:1px;height:1352px;background:#8a8a8a;"></div>
<div class="a" style="left:1607px;top:31px;width:1px;height:1352px;background:#6a6a6a;"></div>
<div class="a" style="left:72px;top:208px;width:236px;height:469px;background:rgba(0,0,0,0.18);filter:blur(2px);"></div>
<div class="a" style="left:69px;top:205px;width:236px;height:469px;background:#f0f0f0;border:1px solid #a0a0a0;box-sizing:border-box;"></div>
<div class="a" style="left:74px;top:371px;width:228px;height:1px;background:#c8c8c8;"></div>
<div class="a" style="left:74px;top:519px;width:228px;height:1px;background:#c8c8c8;"></div>
<div class="a" style="left:74px;top:643px;width:228px;height:1px;background:#c8c8c8;"></div>
<div class="a" style="left:68px;top:226px;width:238px;height:31px;background:#ff0000;"></div>
<div class="a" style="left:72px;top:230px;width:230px;height:23px;background:#0078d7;"></div>
<div class="t" style="left:100px;top:211px;--w:71.2;font-size:12.5px;line-height:16px;color:#000;">新規注文 (N)</div>
<svg class="a" style="left:77px;top:211px;" width="16" height="16" viewBox="0 0 16 16"><path d="M2 1.5H12V12.5L9 15.5H2Z" fill="#fff" stroke="#1866ac" stroke-width="1.2"/><path d="M7 4.5V11M3.8 7.8H10.2" stroke="#1866ac" stroke-width="1.2"/></svg>
<div class="t" style="left:100px;top:234px;--w:105.4;font-size:12.5px;line-height:16px;color:#fff;">チャートウインドウ (C)</div>
<svg class="a" style="left:77px;top:234px;" width="16" height="16" viewBox="0 0 16 16"><path d="M1 1V15H15" stroke="#6a8aa8" fill="none"/><path d="M3 8L6.5 11.5L11 6.5L14 9" stroke="#3a6a98" stroke-width="1.1" fill="none"/></svg>
<div class="t" style="left:100px;top:257px;--w:89.1;font-size:12.5px;line-height:16px;color:#000;">ティックチャート (T)</div>
<svg class="a" style="left:77px;top:257px;" width="16" height="16" viewBox="0 0 16 16"><path d="M0.5 8H3.5L5.5 4L8 12L10.5 6L12 8H15" stroke="#1866ac" stroke-width="1.2" fill="none"/></svg>
<div class="t" style="left:100px;top:280px;--w:83.5;font-size:12.5px;line-height:16px;color:#000;">板注文画面 (D)</div>
<div class="t" style="left:268.3px;top:280px;--w:29.5;font-size:12.5px;line-height:16px;">Alt+B</div>
<svg class="a" style="left:77px;top:280px;" width="16" height="16" viewBox="0 0 16 16"><rect x="1" y="2" width="14" height="12" fill="#fff" stroke="#e04848" stroke-width="1.2"/><path d="M8 2V14M3 5.5H6M3 8H6M3 10.5H6" stroke="#e04848" stroke-width="1.2"/><path d="M10 5.5H13M10 8H13M10 10.5H13" stroke="#1866ac" stroke-width="1.2"/><path d="M8 2H15V14H8" fill="none" stroke="#1866ac" stroke-width="1.2"/></svg>
<div class="t" style="left:100px;top:303px;--w:95.1;font-size:12.5px;line-height:16px;color:#9a9a9a;">オプションボード(O)</div>
<svg class="a" style="left:77px;top:303px;" width="16" height="16" viewBox="0 0 16 16"><path d="M2 2L14 14M14 2L2 14" stroke="#bbb" stroke-width="1.1"/><path d="M1 8H15" stroke="#ccc" stroke-dasharray="1 1"/></svg>
<div class="t" style="left:100px;top:326px;--w:43.2;font-size:12.5px;line-height:16px;color:#000;">仕様 (p)</div>
<svg class="a" style="left:77px;top:326px;" width="16" height="16" viewBox="0 0 16 16"><rect x="1" y="1.5" width="14" height="13" rx="2" fill="#c4e2fb" stroke="#1866ac" stroke-width="1.2"/><path d="M1 5H15M4 8H5M7 8H12M4 11H5M7 11H12" stroke="#1866ac" stroke-width="1.1"/></svg>
<div class="t" style="left:100px;top:349px;--w:112.1;font-size:12.5px;line-height:16px;color:#000;">ポップアッププライス (o)</div>
<div class="t" style="left:280.40000000000003px;top:349px;--w:17.4;font-size:12.5px;line-height:16px;">F10</div>
<svg class="a" style="left:77px;top:349px;" width="16" height="16" viewBox="0 0 16 16"><rect x="1" y="1.5" width="14" height="13" rx="2" fill="#c4e2fb" stroke="#1866ac" stroke-width="1.2"/><path d="M3.5 7Q5 3 7 6" stroke="#18a818" stroke-width="1.3" fill="none"/><path d="M8 12L6 10Q5 8.5 6.5 8Q7.5 7.8 8 8.8Q8.5 7.8 9.5 8Q11 8.5 10 10Z" fill="#f08080" stroke="#e04848" stroke-width="0.8"/></svg>
<div class="t" style="left:100px;top:381px;--w:52.2;font-size:12.5px;line-height:16px;color:#000;">非表示 (I)</div>
<div class="t" style="left:265.40000000000003px;top:381px;--w:32.4;font-size:12.5px;line-height:16px;">Delete</div>
<div class="t" style="left:100px;top:404px;--w:81.3;font-size:12.5px;line-height:16px;color:#000;">全て非表示 (H)</div>
<div class="t" style="left:100px;top:427px;--w:65;font-size:12.5px;line-height:16px;color:#000;">全て表示 (S)</div>
<div class="t" style="left:100px;top:450px;--w:68.9;font-size:12.5px;line-height:16px;color:#000;">銘柄一覧 (Y)</div>
<div class="t" style="left:263.2px;top:450px;--w:34.6;font-size:12.5px;line-height:16px;">Ctrl+U</div>
<svg class="a" style="left:77px;top:450px;" width="16" height="16" viewBox="0 0 16 16"><rect x="0.5" y="0.5" width="15" height="15" rx="2" fill="#f4c20d" stroke="#d9a300"/><text x="4" y="12.5" font-size="11" fill="#a87800" font-family="Liberation Sans">$</text></svg>
<div class="t" style="left:100px;top:472px;--w:27.7;font-size:12.5px;line-height:16px;color:#000;">セット</div>
<svg class="a" style="left:290px;top:476px;" width="5" height="8" viewBox="0 0 5 8"><path d="M0 0V8L5 4Z" fill="#000"/></svg>
<div class="t" style="left:100px;top:495px;--w:29.9;font-size:12.5px;line-height:16px;color:#000;">ソート</div>
<svg class="a" style="left:290px;top:499px;" width="5" height="8" viewBox="0 0 5 8"><path d="M0 0V8L5 4Z" fill="#000"/></svg>
<div class="t" style="left:100px;top:528px;--w:123.1;font-size:12.5px;line-height:16px;color:#000;">システムカラーを使用 (L)</div>
<div class="t" style="left:100px;top:551px;--w:106.8;font-size:12.5px;line-height:16px;color:#000;">ミリ秒を表示する (M)</div>
<div class="t" style="left:100px;top:574px;--w:66.9;font-size:12.5px;line-height:16px;color:#000;">自動削除 (E)</div>
<svg class="a" style="left:81px;top:578px;" width="9" height="8" viewBox="0 0 9 8"><path d="M1 4L3.5 6.5L8 1.5" stroke="#222" stroke-width="1.3" fill="none"/></svg>
<div class="t" style="left:100px;top:597px;--w:69.1;font-size:12.5px;line-height:16px;color:#000;">自動整列 (A)</div>
<svg class="a" style="left:81px;top:601px;" width="9" height="8" viewBox="0 0 9 8"><path d="M1 4L3.5 6.5L8 1.5" stroke="#222" stroke-width="1.3" fill="none"/></svg>
<div class="t" style="left:100px;top:620px;--w:53.3;font-size:12.5px;line-height:16px;color:#000;">グリッド (G)</div>
<svg class="a" style="left:81px;top:624px;" width="9" height="8" viewBox="0 0 9 8"><path d="M1 4L3.5 6.5L8 1.5" stroke="#222" stroke-width="1.3" fill="none"/></svg>
<div class="t" style="left:100px;top:651px;--w:37.9;font-size:12.5px;line-height:16px;color:#000;">表示列</div>
<svg class="a" style="left:290px;top:655px;" width="5" height="8" viewBox="0 0 5 8"><path d="M0 0V8L5 4Z" fill="#000"/></svg>
<svg class="a" style="left:258px;top:233px;" width="13" height="20" viewBox="0 0 13 20"><path d="M1 1V16L4.5 12.5L7 18.5L9.5 17.5L7 11.5H12Z" fill="#fff" stroke="#000" stroke-width="1" stroke-linejoin="round"/></svg>
<svg class="a" style="left:309px;top:220px;" width="45" height="45" viewBox="0 0 45 45"><circle cx="22" cy="23" r="22" fill="#ff0000"/><text x="22.5" y="32.5" text-anchor="middle" font-size="26" fill="#fff" font-family="Liberation Sans">7</text></svg>
<script>
(function(){var els=document.querySelectorAll('.t');for(var i=0;i<els.length;i++){var e=els[i];var w=parseFloat(e.style.getPropertyValue('--w'));if(!w)continue;var r=e.getBoundingClientRect().width;if(r>0){e.style.transformOrigin='0 0';e.style.transform='scaleX('+(w/r)+')';}}})();
</script>
</body></html>
